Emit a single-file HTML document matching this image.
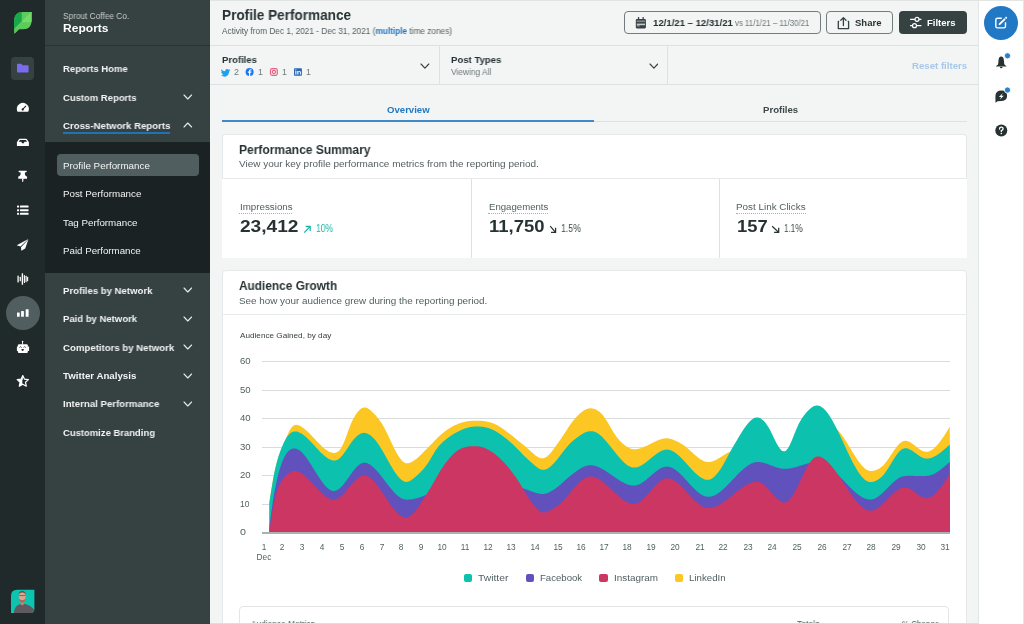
<!DOCTYPE html>
<html><head><meta charset="utf-8"><style>
html,body{margin:0;padding:0;width:1024px;height:624px;overflow:hidden;background:#f3f4f4}
body{position:relative;font-family:'Liberation Sans', sans-serif}
.t{position:absolute;white-space:nowrap;font-family:'Liberation Sans', sans-serif;will-change:transform;transform-origin:0 0}
.r{position:absolute;display:block}
</style></head><body>
<div class="r" style="left:0px;top:0px;width:45px;height:624px;background:#212a2b;"></div>
<div class="r" style="left:45px;top:0px;width:165px;height:624px;background:#364141;"></div>
<div class="r" style="left:45px;top:45px;width:165px;height:1px;background:#2a3434;"></div>
<div class="r" style="left:45px;top:142px;width:165px;height:131px;background:#1b2223;"></div>
<div class="r" style="left:210px;top:0px;width:768px;height:624px;background:#f3f4f4;"></div>
<div class="r" style="left:978px;top:0px;width:46px;height:624px;background:#ffffff;border-left:1px solid #e3e6e6;box-sizing:border-box;"></div>
<div class="r" style="left:1023px;top:0px;width:1px;height:624px;background:#e3e6e6;"></div>
<div class="r" style="left:210px;top:0px;width:814px;height:1px;background:#e3e5e5;"></div>
<div class="t" style="left:62.5px;top:11.72px;font-size:8.57px;line-height:8.57px;font-weight:400;color:#c8cccc;letter-spacing:0px;transform:scaleX(0.9677);">Sprout Coffee Co.</div>
<div class="t" style="left:62.5px;top:23.17px;font-size:11.57px;line-height:11.57px;font-weight:700;color:#ffffff;letter-spacing:0px;transform:scaleX(1.0425);">Reports</div>
<div class="t" style="left:62.5px;top:63.85px;font-size:9.71px;line-height:9.71px;font-weight:700;color:#f3f4f4;letter-spacing:0px;transform:scaleX(0.9749);">Reports Home</div>
<div class="t" style="left:62.5px;top:92.55px;font-size:9.71px;line-height:9.71px;font-weight:700;color:#f3f4f4;letter-spacing:0px;transform:scaleX(0.9759);">Custom Reports</div>
<svg class="r" style="left:183.0px;top:94.0px" width="9.6" height="6"><path d="M1 1 L4.8 5 L8.6 1" fill="none" stroke="#e6e9e9" stroke-width="1.1" stroke-linecap="round" stroke-linejoin="round"/></svg>
<div class="t" style="left:62.5px;top:120.95px;font-size:9.71px;line-height:9.71px;font-weight:700;color:#f3f4f4;letter-spacing:0px;transform:scaleX(0.9917);">Cross-Network Reports</div>
<svg class="r" style="left:183.0px;top:122.3px" width="9.6" height="6"><path d="M1 5 L4.8 1 L8.6 5" fill="none" stroke="#e6e9e9" stroke-width="1.1" stroke-linecap="round" stroke-linejoin="round"/></svg>
<div class="r" style="left:62.5px;top:132.3px;width:107px;height:2px;background:#2171b5;"></div>
<div class="r" style="left:57px;top:154px;width:142px;height:22px;background:#515e5f;border-radius:4px;"></div>
<div class="t" style="left:62.5px;top:160.65px;font-size:9.71px;line-height:9.71px;font-weight:400;color:#f3f4f4;letter-spacing:0px;transform:scaleX(1.0133);">Profile Performance</div>
<div class="t" style="left:62.5px;top:189.10px;font-size:9.71px;line-height:9.71px;font-weight:400;color:#f3f4f4;letter-spacing:0px;transform:scaleX(1.0092);">Post Performance</div>
<div class="t" style="left:62.5px;top:217.55px;font-size:9.71px;line-height:9.71px;font-weight:400;color:#f3f4f4;letter-spacing:0px;transform:scaleX(1.0080);">Tag Performance</div>
<div class="t" style="left:62.5px;top:246.00px;font-size:9.71px;line-height:9.71px;font-weight:400;color:#f3f4f4;letter-spacing:0px;transform:scaleX(1.0014);">Paid Performance</div>
<div class="t" style="left:62.5px;top:285.65px;font-size:9.71px;line-height:9.71px;font-weight:700;color:#f3f4f4;letter-spacing:0px;transform:scaleX(0.9865);">Profiles by Network</div>
<svg class="r" style="left:183.0px;top:287.4px" width="9.6" height="6"><path d="M1 1 L4.8 5 L8.6 1" fill="none" stroke="#e6e9e9" stroke-width="1.1" stroke-linecap="round" stroke-linejoin="round"/></svg>
<div class="t" style="left:62.5px;top:314.10px;font-size:9.71px;line-height:9.71px;font-weight:700;color:#f3f4f4;letter-spacing:0px;transform:scaleX(0.9810);">Paid by Network</div>
<svg class="r" style="left:183.0px;top:315.84999999999997px" width="9.6" height="6"><path d="M1 1 L4.8 5 L8.6 1" fill="none" stroke="#e6e9e9" stroke-width="1.1" stroke-linecap="round" stroke-linejoin="round"/></svg>
<div class="t" style="left:62.5px;top:342.55px;font-size:9.71px;line-height:9.71px;font-weight:700;color:#f3f4f4;letter-spacing:0px;transform:scaleX(0.9923);">Competitors by Network</div>
<svg class="r" style="left:183.0px;top:344.29999999999995px" width="9.6" height="6"><path d="M1 1 L4.8 5 L8.6 1" fill="none" stroke="#e6e9e9" stroke-width="1.1" stroke-linecap="round" stroke-linejoin="round"/></svg>
<div class="t" style="left:62.5px;top:371.00px;font-size:9.71px;line-height:9.71px;font-weight:700;color:#f3f4f4;letter-spacing:0px;transform:scaleX(0.9991);">Twitter Analysis</div>
<svg class="r" style="left:183.0px;top:372.75px" width="9.6" height="6"><path d="M1 1 L4.8 5 L8.6 1" fill="none" stroke="#e6e9e9" stroke-width="1.1" stroke-linecap="round" stroke-linejoin="round"/></svg>
<div class="t" style="left:62.5px;top:399.45px;font-size:9.71px;line-height:9.71px;font-weight:700;color:#f3f4f4;letter-spacing:0px;transform:scaleX(0.9928);">Internal Performance</div>
<svg class="r" style="left:183.0px;top:401.2px" width="9.6" height="6"><path d="M1 1 L4.8 5 L8.6 1" fill="none" stroke="#e6e9e9" stroke-width="1.1" stroke-linecap="round" stroke-linejoin="round"/></svg>
<div class="t" style="left:62.5px;top:427.90px;font-size:9.71px;line-height:9.71px;font-weight:700;color:#f3f4f4;letter-spacing:0px;transform:scaleX(0.9748);">Customize Branding</div>
<div class="t" style="left:222.2px;top:9.15px;font-size:13.71px;line-height:13.71px;font-weight:700;color:#273333;letter-spacing:0px;transform:scaleX(0.9917);">Profile Performance</div>
<div class="t" style="left:222.2px;top:26.65px;font-size:8.29px;line-height:8.29px;font-weight:400;color:#515e5f;letter-spacing:0px;transform:scaleX(0.9978);">Activity from Dec 1, 2021 - Dec 31, 2021 (<b style="color:#2079c3">multiple</b> time zones)</div>
<div class="r" style="left:210px;top:45px;width:768px;height:1px;background:#dee1e1;"></div>
<div class="r" style="left:623.5px;top:11px;width:197px;height:23px;border:1px solid #727c7c;border-radius:4px;box-sizing:border-box"></div>
<div class="t" style="left:652.6px;top:17.85px;font-size:9.71px;line-height:9.71px;font-weight:700;color:#273333;letter-spacing:0px;transform:scaleX(0.9868);">12/1/21 – 12/31/21</div>
<div class="t" style="left:734.9px;top:19.15px;font-size:8.29px;line-height:8.29px;font-weight:400;color:#6e797a;letter-spacing:0px;transform:scaleX(0.9479);">vs 11/1/21 – 11/30/21</div>
<div class="r" style="left:826px;top:11px;width:66.8px;height:23px;border:1px solid #727c7c;border-radius:4px;box-sizing:border-box"></div>
<div class="t" style="left:855.0px;top:17.78px;font-size:9.43px;line-height:9.43px;font-weight:700;color:#273333;letter-spacing:0px;transform:scaleX(1.0107);">Share</div>
<div class="r" style="left:899px;top:11px;width:67.8px;height:23px;background:#364141;border-radius:4px"></div>
<div class="t" style="left:927.3px;top:17.78px;font-size:9.43px;line-height:9.43px;font-weight:700;color:#ffffff;letter-spacing:0px;transform:scaleX(1.0065);">Filters</div>
<div class="r" style="left:210px;top:84px;width:768px;height:1px;background:#dee1e1;"></div>
<div class="r" style="left:439px;top:45px;width:1px;height:40px;background:#dee1e1;"></div>
<div class="r" style="left:667px;top:45px;width:1px;height:40px;background:#dee1e1;"></div>
<div class="t" style="left:222.2px;top:55.45px;font-size:9.71px;line-height:9.71px;font-weight:700;color:#273333;letter-spacing:0px;transform:scaleX(0.9795);">Profiles</div>
<div class="t" style="left:451.2px;top:55.45px;font-size:9.71px;line-height:9.71px;font-weight:700;color:#273333;letter-spacing:0px;transform:scaleX(0.9848);">Post Types</div>
<div class="t" style="left:451.2px;top:67.75px;font-size:9.0px;line-height:9.0px;font-weight:400;color:#6e797a;letter-spacing:0px;transform:scaleX(0.9311);">Viewing All</div>
<svg class="r" style="left:420.20000000000005px;top:62.49999999999999px" width="9.8" height="6.2"><path d="M1 1 L4.9 5.2 L8.8 1" fill="none" stroke="#364141" stroke-width="1.15" stroke-linecap="round" stroke-linejoin="round"/></svg>
<svg class="r" style="left:648.7px;top:62.49999999999999px" width="9.8" height="6.2"><path d="M1 1 L4.9 5.2 L8.8 1" fill="none" stroke="#364141" stroke-width="1.15" stroke-linecap="round" stroke-linejoin="round"/></svg>
<div class="t" style="left:911.9px;top:60.78px;font-size:9.43px;line-height:9.43px;font-weight:700;color:#a6c8ea;letter-spacing:0px;transform:scaleX(1.0211);">Reset filters</div>
<div class="t" style="left:233.5px;top:67.64px;font-size:8.9px;line-height:8.9px;font-weight:400;color:#6e797a;letter-spacing:0px;">2</div>
<div class="t" style="left:257.6px;top:67.64px;font-size:8.9px;line-height:8.9px;font-weight:400;color:#6e797a;letter-spacing:0px;">1</div>
<div class="t" style="left:281.6px;top:67.64px;font-size:8.9px;line-height:8.9px;font-weight:400;color:#6e797a;letter-spacing:0px;">1</div>
<div class="t" style="left:305.9px;top:67.64px;font-size:8.9px;line-height:8.9px;font-weight:400;color:#6e797a;letter-spacing:0px;">1</div>
<div class="t" style="left:387.0px;top:105.18px;font-size:9.43px;line-height:9.43px;font-weight:700;color:#2079c3;letter-spacing:0px;transform:scaleX(1.0183);">Overview</div>
<div class="t" style="left:763.4px;top:105.18px;font-size:9.43px;line-height:9.43px;font-weight:700;color:#3d4848;letter-spacing:0px;transform:scaleX(1.0176);">Profiles</div>
<div class="r" style="left:222px;top:120.5px;width:745px;height:1px;background:#dee1e1;"></div>
<div class="r" style="left:222px;top:120px;width:372.3px;height:2px;background:#3f88cc;"></div>
<div class="r" style="left:222.4px;top:133.5px;width:744.3px;height:45px;background:#fff;border:1px solid #e6e9e9;border-bottom:0;border-radius:4px 4px 0 0;box-sizing:border-box"></div>
<div class="r" style="left:221.8px;top:178px;width:745px;height:80px;background:#ffffff;"></div>
<div class="t" style="left:239.2px;top:143.63px;font-size:12.43px;line-height:12.43px;font-weight:700;color:#273333;letter-spacing:0px;transform:scaleX(0.9671);">Performance Summary</div>
<div class="t" style="left:239.2px;top:159.35px;font-size:9.71px;line-height:9.71px;font-weight:400;color:#515e5f;letter-spacing:0px;transform:scaleX(1.0266);">View your key profile performance metrics from the reporting period.</div>
<div class="r" style="left:222.4px;top:178px;width:744.3px;height:1px;background:#e6e9e9;"></div>
<div class="r" style="left:470.5px;top:178.5px;width:1px;height:79.5px;background:#dee1e1;"></div>
<div class="r" style="left:719px;top:178.5px;width:1px;height:79.5px;background:#dee1e1;"></div>
<div class="t" style="left:239.9px;top:201.68px;font-size:9.43px;line-height:9.43px;font-weight:400;color:#515e5f;letter-spacing:0px;transform:scaleX(1.0372);">Impressions</div>
<div class="r" style="left:239.4px;top:213px;width:52.99999999999997px;height:0;border-top:1px dotted #a9b0b0"></div>
<div class="t" style="left:240.3px;top:218.72px;font-size:16.57px;line-height:16.57px;font-weight:700;color:#273333;letter-spacing:0px;transform:scaleX(1.1533);">23,412</div>
<svg class="r" style="left:303.1px;top:225.2px" width="9" height="9"><path d="M1.2 7.6 L7.199999999999989 1.4 M2.599999999999989 1.4 H7.199999999999989 V6.0" fill="none" stroke="#17b8a6" stroke-width="1.25"/></svg>
<div class="t" style="left:316.2px;top:224.40px;font-size:10.0px;line-height:10.0px;font-weight:400;color:#17b8a6;letter-spacing:0px;transform:scaleX(0.8542);">10%</div>
<div class="t" style="left:488.5px;top:201.68px;font-size:9.43px;line-height:9.43px;font-weight:400;color:#515e5f;letter-spacing:0px;transform:scaleX(1.0209);">Engagements</div>
<div class="r" style="left:488.0px;top:213px;width:59.700000000000045px;height:0;border-top:1px dotted #a9b0b0"></div>
<div class="t" style="left:488.9px;top:218.72px;font-size:16.57px;line-height:16.57px;font-weight:700;color:#273333;letter-spacing:0px;transform:scaleX(1.1155);">11,750</div>
<svg class="r" style="left:548.8px;top:225.2px" width="9" height="9"><path d="M1.2 1.2 L6.600000000000023 7.4 M2.000000000000023 7.4 H6.600000000000023 V2.8000000000000007" fill="none" stroke="#273333" stroke-width="1.25"/></svg>
<div class="t" style="left:561.4px;top:224.40px;font-size:10.0px;line-height:10.0px;font-weight:400;color:#3d4848;letter-spacing:0px;transform:scaleX(0.8734);">1.5%</div>
<div class="t" style="left:736.4px;top:201.68px;font-size:9.43px;line-height:9.43px;font-weight:400;color:#515e5f;letter-spacing:0px;transform:scaleX(1.0465);">Post Link Clicks</div>
<div class="r" style="left:735.9px;top:213px;width:69.89999999999998px;height:0;border-top:1px dotted #a9b0b0"></div>
<div class="t" style="left:736.8px;top:218.72px;font-size:16.57px;line-height:16.57px;font-weight:700;color:#273333;letter-spacing:0px;transform:scaleX(1.1102);">157</div>
<svg class="r" style="left:770.9px;top:225.2px" width="9" height="9"><path d="M1.2 1.2 L7.699999999999932 7.4 M3.099999999999932 7.4 H7.699999999999932 V2.8000000000000007" fill="none" stroke="#273333" stroke-width="1.25"/></svg>
<div class="t" style="left:784.2px;top:224.40px;font-size:10.0px;line-height:10.0px;font-weight:400;color:#3d4848;letter-spacing:0px;transform:scaleX(0.8055);">1.1%</div>
<div class="r" style="left:222.4px;top:270px;width:744.3px;height:400px;background:#fff;border:1px solid #e6e9e9;border-radius:4px;box-sizing:border-box"></div>
<div class="t" style="left:239.3px;top:280.35px;font-size:12.29px;line-height:12.29px;font-weight:700;color:#273333;letter-spacing:0px;transform:scaleX(0.9652);">Audience Growth</div>
<div class="t" style="left:239.3px;top:296.02px;font-size:9.86px;line-height:9.86px;font-weight:400;color:#515e5f;letter-spacing:0px;transform:scaleX(1.0016);">See how your audience grew during the reporting period.</div>
<div class="r" style="left:222.4px;top:314px;width:744.3px;height:1px;background:#e8ebeb;"></div>
<div class="t" style="left:240.0px;top:332.00px;font-size:8.0px;line-height:8.0px;font-weight:400;color:#364141;letter-spacing:0px;transform:scaleX(1.0209);">Audience Gained, by day</div>
<div class="r" style="left:261.7px;top:361.0px;width:688.3px;height:1px;background:#d9dcdc;"></div>
<div class="t" style="left:239.8px;top:357.33px;font-size:8.43px;line-height:8.43px;font-weight:400;color:#515e5f;letter-spacing:0px;transform:scaleX(1.1383);">60</div>
<div class="r" style="left:261.7px;top:389.5px;width:688.3px;height:1px;background:#d9dcdc;"></div>
<div class="t" style="left:239.8px;top:385.83px;font-size:8.43px;line-height:8.43px;font-weight:400;color:#515e5f;letter-spacing:0px;transform:scaleX(1.1383);">50</div>
<div class="r" style="left:261.7px;top:418.0px;width:688.3px;height:1px;background:#d9dcdc;"></div>
<div class="t" style="left:239.8px;top:414.33px;font-size:8.43px;line-height:8.43px;font-weight:400;color:#515e5f;letter-spacing:0px;transform:scaleX(1.1383);">40</div>
<div class="r" style="left:261.7px;top:446.5px;width:688.3px;height:1px;background:#d9dcdc;"></div>
<div class="t" style="left:239.8px;top:442.83px;font-size:8.43px;line-height:8.43px;font-weight:400;color:#515e5f;letter-spacing:0px;transform:scaleX(1.1383);">30</div>
<div class="r" style="left:261.7px;top:475.0px;width:688.3px;height:1px;background:#d9dcdc;"></div>
<div class="t" style="left:239.8px;top:471.33px;font-size:8.43px;line-height:8.43px;font-weight:400;color:#515e5f;letter-spacing:0px;transform:scaleX(1.1383);">20</div>
<div class="r" style="left:261.7px;top:503.5px;width:688.3px;height:1px;background:#d9dcdc;"></div>
<div class="t" style="left:239.8px;top:499.83px;font-size:8.43px;line-height:8.43px;font-weight:400;color:#515e5f;letter-spacing:0px;transform:scaleX(0.9790);">10</div>
<div class="t" style="left:239.8px;top:528.33px;font-size:8.43px;line-height:8.43px;font-weight:400;color:#515e5f;letter-spacing:0px;transform:scaleX(1.2691);">0</div>
<svg class="r" style="left:0;top:0" width="1024" height="624" viewBox="0 0 1024 624"><path d="M269.30,532.5 L269.30,502.90 269.8,499.62 270.3,496.37 270.8,493.15 271.3,489.99 271.8,486.90 272.3,483.90 272.8,481.01 273.3,478.23 273.8,475.57 274.3,473.05 274.8,470.66 275.3,468.40 275.8,466.28 276.3,464.29 276.8,462.41 277.3,460.66 277.8,459.01 278.3,457.45 278.8,455.98 279.3,454.58 279.8,453.24 280.3,451.95 280.8,450.70 281.3,449.47 281.8,448.27 282.3,447.08 282.8,445.90 283.3,444.71 283.8,443.53 284.3,442.34 284.8,441.16 285.3,439.97 285.8,438.79 286.3,437.61 286.8,436.45 287.3,435.32 287.8,434.21 288.3,433.13 288.8,432.10 289.3,431.12 289.8,430.20 290.3,429.34 290.8,428.54 291.3,427.83 291.8,427.19 292.3,426.63 292.8,426.15 293.3,425.75 293.8,425.43 294.3,425.18 294.8,425.00 295.3,424.89 295.8,424.84 296.3,424.83 296.8,424.88 297.3,424.96 297.8,425.08 298.3,425.23 298.8,425.41 299.3,425.62 299.8,425.85 300.3,426.10 300.8,426.37 301.3,426.66 301.8,426.97 302.3,427.29 302.8,427.63 303.3,427.99 303.8,428.37 304.3,428.75 304.8,429.16 305.3,429.57 305.8,430.00 306.3,430.44 306.8,430.89 307.3,431.35 307.8,431.82 308.3,432.30 308.8,432.79 309.3,433.29 309.8,433.79 310.3,434.30 310.8,434.82 311.3,435.34 311.8,435.87 312.3,436.40 312.8,436.93 313.3,437.46 313.8,438.00 314.3,438.54 314.8,439.07 315.3,439.61 315.8,440.14 316.3,440.68 316.8,441.21 317.3,441.74 317.8,442.26 318.3,442.78 318.8,443.30 319.3,443.81 319.8,444.31 320.3,444.80 320.8,445.29 321.3,445.77 321.8,446.24 322.3,446.70 322.8,447.15 323.3,447.59 323.8,448.01 324.3,448.42 324.8,448.82 325.3,449.21 325.8,449.58 326.3,449.94 326.8,450.27 327.3,450.60 327.8,450.90 328.3,451.19 328.8,451.46 329.3,451.70 329.8,451.93 330.3,452.14 330.8,452.32 331.3,452.49 331.8,452.62 332.3,452.73 332.8,452.82 333.3,452.88 333.8,452.90 334.3,452.90 334.8,452.85 335.3,452.78 335.8,452.66 336.3,452.50 336.8,452.29 337.3,452.03 337.8,451.72 338.3,451.35 338.8,450.91 339.3,450.41 339.8,449.84 340.3,449.20 340.8,448.48 341.3,447.69 341.8,446.82 342.3,445.87 342.8,444.85 343.3,443.76 343.8,442.62 344.3,441.41 344.8,440.15 345.3,438.85 345.8,437.52 346.3,436.17 346.8,434.79 347.3,433.41 347.8,432.03 348.3,430.66 348.8,429.31 349.3,427.98 349.8,426.68 350.3,425.43 350.8,424.21 351.3,423.04 351.8,421.91 352.3,420.84 352.8,419.81 353.3,418.83 353.8,417.90 354.3,417.01 354.8,416.16 355.3,415.35 355.8,414.57 356.3,413.83 356.8,413.12 357.3,412.45 357.8,411.82 358.3,411.21 358.8,410.65 359.3,410.13 359.8,409.65 360.3,409.21 360.8,408.81 361.3,408.47 361.8,408.17 362.3,407.92 362.8,407.72 363.3,407.58 363.8,407.48 364.3,407.43 364.8,407.43 365.3,407.48 365.8,407.57 366.3,407.70 366.8,407.88 367.3,408.09 367.8,408.34 368.3,408.63 368.8,408.95 369.3,409.30 369.8,409.67 370.3,410.07 370.8,410.50 371.3,410.94 371.8,411.41 372.3,411.89 372.8,412.39 373.3,412.90 373.8,413.42 374.3,413.96 374.8,414.50 375.3,415.05 375.8,415.61 376.3,416.18 376.8,416.76 377.3,417.35 377.8,417.95 378.3,418.57 378.8,419.21 379.3,419.86 379.8,420.54 380.3,421.24 380.8,421.97 381.3,422.72 381.8,423.50 382.3,424.32 382.8,425.15 383.3,426.02 383.8,426.91 384.3,427.83 384.8,428.77 385.3,429.73 385.8,430.71 386.3,431.71 386.8,432.73 387.3,433.75 387.8,434.79 388.3,435.84 388.8,436.90 389.3,437.96 389.8,439.03 390.3,440.09 390.8,441.16 391.3,442.23 391.8,443.29 392.3,444.34 392.8,445.38 393.3,446.42 393.8,447.44 394.3,448.45 394.8,449.44 395.3,450.41 395.8,451.37 396.3,452.30 396.8,453.20 397.3,454.08 397.8,454.93 398.3,455.75 398.8,456.54 399.3,457.29 399.8,458.01 400.3,458.68 400.8,459.32 401.3,459.92 401.8,460.47 402.3,460.97 402.8,461.43 403.3,461.84 403.8,462.20 404.3,462.51 404.8,462.77 405.3,462.97 405.8,463.13 406.3,463.24 406.8,463.30 407.3,463.31 407.8,463.28 408.3,463.22 408.8,463.11 409.3,462.97 409.8,462.80 410.3,462.60 410.8,462.38 411.3,462.14 411.8,461.88 412.3,461.60 412.8,461.30 413.3,460.99 413.8,460.67 414.3,460.34 414.8,459.99 415.3,459.63 415.8,459.26 416.3,458.88 416.8,458.48 417.3,458.07 417.8,457.65 418.3,457.21 418.8,456.77 419.3,456.31 419.8,455.84 420.3,455.36 420.8,454.88 421.3,454.39 421.8,453.89 422.3,453.38 422.8,452.87 423.3,452.36 423.8,451.84 424.3,451.32 424.8,450.81 425.3,450.29 425.8,449.77 426.3,449.26 426.8,448.75 427.3,448.24 427.8,447.73 428.3,447.22 428.8,446.71 429.3,446.20 429.8,445.70 430.3,445.19 430.8,444.68 431.3,444.17 431.8,443.66 432.3,443.15 432.8,442.64 433.3,442.13 433.8,441.62 434.3,441.10 434.8,440.59 435.3,440.08 435.8,439.57 436.3,439.07 436.8,438.56 437.3,438.07 437.8,437.57 438.3,437.08 438.8,436.60 439.3,436.13 439.8,435.66 440.3,435.20 440.8,434.75 441.3,434.31 441.8,433.88 442.3,433.45 442.8,433.04 443.3,432.63 443.8,432.24 444.3,431.85 444.8,431.47 445.3,431.10 445.8,430.73 446.3,430.37 446.8,430.02 447.3,429.68 447.8,429.35 448.3,429.02 448.8,428.70 449.3,428.38 449.8,428.07 450.3,427.77 450.8,427.47 451.3,427.18 451.8,426.90 452.3,426.62 452.8,426.35 453.3,426.09 453.8,425.83 454.3,425.58 454.8,425.34 455.3,425.10 455.8,424.86 456.3,424.64 456.8,424.42 457.3,424.21 457.8,424.00 458.3,423.80 458.8,423.61 459.3,423.42 459.8,423.24 460.3,423.07 460.8,422.90 461.3,422.74 461.8,422.59 462.3,422.44 462.8,422.30 463.3,422.17 463.8,422.04 464.3,421.92 464.8,421.81 465.3,421.70 465.8,421.60 466.3,421.50 466.8,421.41 467.3,421.33 467.8,421.25 468.3,421.17 468.8,421.10 469.3,421.04 469.8,420.98 470.3,420.93 470.8,420.88 471.3,420.84 471.8,420.80 472.3,420.76 472.8,420.74 473.3,420.71 473.8,420.69 474.3,420.67 474.8,420.66 475.3,420.65 475.8,420.64 476.3,420.64 476.8,420.65 477.3,420.65 477.8,420.66 478.3,420.67 478.8,420.69 479.3,420.71 479.8,420.74 480.3,420.77 480.8,420.80 481.3,420.84 481.8,420.88 482.3,420.92 482.8,420.97 483.3,421.03 483.8,421.09 484.3,421.16 484.8,421.23 485.3,421.31 485.8,421.39 486.3,421.48 486.8,421.57 487.3,421.68 487.8,421.78 488.3,421.90 488.8,422.02 489.3,422.15 489.8,422.28 490.3,422.42 490.8,422.57 491.3,422.73 491.8,422.90 492.3,423.07 492.8,423.25 493.3,423.44 493.8,423.64 494.3,423.85 494.8,424.06 495.3,424.29 495.8,424.52 496.3,424.77 496.8,425.02 497.3,425.28 497.8,425.56 498.3,425.84 498.8,426.13 499.3,426.43 499.8,426.74 500.3,427.06 500.8,427.38 501.3,427.71 501.8,428.05 502.3,428.40 502.8,428.75 503.3,429.11 503.8,429.47 504.3,429.83 504.8,430.20 505.3,430.57 505.8,430.94 506.3,431.32 506.8,431.69 507.3,432.07 507.8,432.45 508.3,432.83 508.8,433.21 509.3,433.59 509.8,433.97 510.3,434.36 510.8,434.75 511.3,435.13 511.8,435.52 512.3,435.92 512.8,436.31 513.3,436.71 513.8,437.11 514.3,437.52 514.8,437.92 515.3,438.33 515.8,438.73 516.3,439.14 516.8,439.55 517.3,439.96 517.8,440.38 518.3,440.79 518.8,441.20 519.3,441.61 519.8,442.02 520.3,442.43 520.8,442.84 521.3,443.25 521.8,443.65 522.3,444.06 522.8,444.46 523.3,444.87 523.8,445.27 524.3,445.68 524.8,446.08 525.3,446.49 525.8,446.90 526.3,447.32 526.8,447.74 527.3,448.16 527.8,448.59 528.3,449.03 528.8,449.47 529.3,449.92 529.8,450.38 530.3,450.83 530.8,451.29 531.3,451.75 531.8,452.21 532.3,452.66 532.8,453.11 533.3,453.56 533.8,454.00 534.3,454.42 534.8,454.84 535.3,455.24 535.8,455.63 536.3,455.99 536.8,456.34 537.3,456.67 537.8,456.98 538.3,457.26 538.8,457.51 539.3,457.74 539.8,457.93 540.3,458.09 540.8,458.22 541.3,458.31 541.8,458.36 542.3,458.37 542.8,458.34 543.3,458.28 543.8,458.17 544.3,458.01 544.8,457.82 545.3,457.58 545.8,457.31 546.3,456.99 546.8,456.64 547.3,456.25 547.8,455.83 548.3,455.37 548.8,454.88 549.3,454.37 549.8,453.82 550.3,453.26 550.8,452.67 551.3,452.06 551.8,451.43 552.3,450.79 552.8,450.13 553.3,449.46 553.8,448.78 554.3,448.09 554.8,447.40 555.3,446.70 555.8,446.00 556.3,445.29 556.8,444.59 557.3,443.89 557.8,443.18 558.3,442.48 558.8,441.78 559.3,441.08 559.8,440.38 560.3,439.67 560.8,438.96 561.3,438.25 561.8,437.53 562.3,436.80 562.8,436.06 563.3,435.31 563.8,434.56 564.3,433.79 564.8,433.03 565.3,432.25 565.8,431.47 566.3,430.69 566.8,429.91 567.3,429.13 567.8,428.35 568.3,427.58 568.8,426.81 569.3,426.06 569.8,425.31 570.3,424.58 570.8,423.86 571.3,423.15 571.8,422.46 572.3,421.79 572.8,421.13 573.3,420.50 573.8,419.88 574.3,419.27 574.8,418.69 575.3,418.12 575.8,417.56 576.3,417.02 576.8,416.50 577.3,415.98 577.8,415.48 578.3,414.99 578.8,414.51 579.3,414.04 579.8,413.59 580.3,413.15 580.8,412.73 581.3,412.32 581.8,411.92 582.3,411.54 582.8,411.18 583.3,410.84 583.8,410.51 584.3,410.21 584.8,409.92 585.3,409.66 585.8,409.41 586.3,409.20 586.8,409.00 587.3,408.83 587.8,408.68 588.3,408.55 588.8,408.46 589.3,408.38 589.8,408.33 590.3,408.31 590.8,408.31 591.3,408.33 591.8,408.38 592.3,408.45 592.8,408.54 593.3,408.65 593.8,408.79 594.3,408.95 594.8,409.12 595.3,409.32 595.8,409.54 596.3,409.78 596.8,410.05 597.3,410.33 597.8,410.64 598.3,410.96 598.8,411.32 599.3,411.70 599.8,412.11 600.3,412.55 600.8,413.01 601.3,413.51 601.8,414.04 602.3,414.60 602.8,415.20 603.3,415.82 603.8,416.48 604.3,417.16 604.8,417.88 605.3,418.62 605.8,419.38 606.3,420.16 606.8,420.96 607.3,421.78 607.8,422.61 608.3,423.45 608.8,424.30 609.3,425.16 609.8,426.03 610.3,426.89 610.8,427.75 611.3,428.61 611.8,429.46 612.3,430.31 612.8,431.14 613.3,431.96 613.8,432.77 614.3,433.55 614.8,434.32 615.3,435.07 615.8,435.79 616.3,436.49 616.8,437.16 617.3,437.81 617.8,438.44 618.3,439.04 618.8,439.62 619.3,440.17 619.8,440.71 620.3,441.23 620.8,441.73 621.3,442.22 621.8,442.69 622.3,443.15 622.8,443.60 623.3,444.04 623.8,444.46 624.3,444.86 624.8,445.26 625.3,445.64 625.8,446.00 626.3,446.35 626.8,446.68 627.3,447.00 627.8,447.29 628.3,447.57 628.8,447.83 629.3,448.07 629.8,448.29 630.3,448.48 630.8,448.66 631.3,448.81 631.8,448.94 632.3,449.04 632.8,449.13 633.3,449.19 633.8,449.24 634.3,449.26 634.8,449.26 635.3,449.25 635.8,449.21 636.3,449.16 636.8,449.10 637.3,449.02 637.8,448.93 638.3,448.83 638.8,448.71 639.3,448.58 639.8,448.44 640.3,448.29 640.8,448.13 641.3,447.97 641.8,447.79 642.3,447.60 642.8,447.41 643.3,447.21 643.8,447.00 644.3,446.79 644.8,446.57 645.3,446.34 645.8,446.11 646.3,445.88 646.8,445.64 647.3,445.40 647.8,445.16 648.3,444.91 648.8,444.66 649.3,444.41 649.8,444.15 650.3,443.90 650.8,443.65 651.3,443.40 651.8,443.14 652.3,442.89 652.8,442.64 653.3,442.40 653.8,442.15 654.3,441.91 654.8,441.67 655.3,441.44 655.8,441.21 656.3,440.99 656.8,440.77 657.3,440.56 657.8,440.35 658.3,440.15 658.8,439.96 659.3,439.77 659.8,439.60 660.3,439.43 660.8,439.28 661.3,439.13 661.8,438.99 662.3,438.87 662.8,438.75 663.3,438.65 663.8,438.56 664.3,438.48 664.8,438.42 665.3,438.37 665.8,438.34 666.3,438.32 666.8,438.32 667.3,438.33 667.8,438.36 668.3,438.41 668.8,438.48 669.3,438.56 669.8,438.66 670.3,438.78 670.8,438.91 671.3,439.05 671.8,439.21 672.3,439.39 672.8,439.57 673.3,439.77 673.8,439.97 674.3,440.18 674.8,440.40 675.3,440.63 675.8,440.86 676.3,441.10 676.8,441.34 677.3,441.59 677.8,441.84 678.3,442.09 678.8,442.35 679.3,442.61 679.8,442.88 680.3,443.15 680.8,443.44 681.3,443.73 681.8,444.03 682.3,444.35 682.8,444.67 683.3,445.01 683.8,445.36 684.3,445.72 684.8,446.09 685.3,446.47 685.8,446.87 686.3,447.27 686.8,447.68 687.3,448.10 687.8,448.53 688.3,448.96 688.8,449.40 689.3,449.85 689.8,450.30 690.3,450.75 690.8,451.21 691.3,451.66 691.8,452.12 692.3,452.58 692.8,453.03 693.3,453.49 693.8,453.94 694.3,454.38 694.8,454.83 695.3,455.26 695.8,455.69 696.3,456.12 696.8,456.53 697.3,456.94 697.8,457.34 698.3,457.73 698.8,458.10 699.3,458.47 699.8,458.82 700.3,459.15 700.8,459.48 701.3,459.78 701.8,460.07 702.3,460.34 702.8,460.60 703.3,460.83 703.8,461.05 704.3,461.24 704.8,461.42 705.3,461.57 705.8,461.70 706.3,461.81 706.8,461.89 707.3,461.96 707.8,461.99 708.3,462.01 708.8,462.00 709.3,461.97 709.8,461.92 710.3,461.85 710.8,461.76 711.3,461.65 711.8,461.52 712.3,461.37 712.8,461.21 713.3,461.03 713.8,460.83 714.3,460.62 714.8,460.40 715.3,460.16 715.8,459.92 716.3,459.66 716.8,459.39 717.3,459.12 717.8,458.83 718.3,458.54 718.8,458.24 719.3,457.94 719.8,457.64 720.3,457.33 720.8,457.01 721.3,456.70 721.8,456.38 722.3,456.07 722.8,455.75 723.3,455.44 723.8,455.13 724.3,454.82 724.8,454.51 725.3,454.22 725.8,453.92 726.3,453.64 726.8,453.36 727.3,453.09 727.8,452.83 728.3,452.58 728.8,452.34 729.3,452.11 729.8,451.89 730.3,451.69 730.8,451.49 731.3,451.30 731.8,451.12 732.3,450.96 732.8,450.80 733.3,450.64 733.8,450.50 734.3,450.36 734.8,450.23 735.3,450.11 735.8,449.99 736.3,449.87 736.8,449.77 737.3,449.66 737.8,449.56 738.3,449.46 738.8,449.37 739.3,449.28 739.8,449.20 740.3,449.11 740.8,449.04 741.3,448.96 741.8,448.89 742.3,448.83 742.8,448.76 743.3,448.70 743.8,448.65 744.3,448.59 744.8,448.54 745.3,448.49 745.8,448.45 746.3,448.41 746.8,448.37 747.3,448.33 747.8,448.29 748.3,448.26 748.8,448.23 749.3,448.21 749.8,448.18 750.3,448.16 750.8,448.14 751.3,448.12 751.8,448.10 752.3,448.08 752.8,448.07 753.3,448.06 753.8,448.05 754.3,448.04 754.8,448.04 755.3,448.04 755.8,448.04 756.3,448.05 756.8,448.06 757.3,448.07 757.8,448.10 758.3,448.12 758.8,448.16 759.3,448.21 759.8,448.26 760.3,448.32 760.8,448.40 761.3,448.48 761.8,448.57 762.3,448.67 762.8,448.78 763.3,448.90 763.8,449.03 764.3,449.16 764.8,449.30 765.3,449.45 765.8,449.60 766.3,449.76 766.8,449.93 767.3,450.10 767.8,450.27 768.3,450.45 768.8,450.63 769.3,450.81 769.8,451.00 770.3,451.18 770.8,451.37 771.3,451.56 771.8,451.74 772.3,451.93 772.8,452.11 773.3,452.30 773.8,452.48 774.3,452.66 774.8,452.83 775.3,453.00 775.8,453.17 776.3,453.33 776.8,453.49 777.3,453.64 777.8,453.78 778.3,453.92 778.8,454.05 779.3,454.17 779.8,454.28 780.3,454.38 780.8,454.47 781.3,454.55 781.8,454.61 782.3,454.66 782.8,454.69 783.3,454.70 783.8,454.68 784.3,454.64 784.8,454.57 785.3,454.46 785.8,454.32 786.3,454.14 786.8,453.92 787.3,453.66 787.8,453.36 788.3,453.01 788.8,452.62 789.3,452.19 789.8,451.72 790.3,451.21 790.8,450.66 791.3,450.07 791.8,449.45 792.3,448.80 792.8,448.11 793.3,447.39 793.8,446.64 794.3,445.87 794.8,445.08 795.3,444.26 795.8,443.42 796.3,442.56 796.8,441.68 797.3,440.79 797.8,439.89 798.3,438.97 798.8,438.05 799.3,437.11 799.8,436.17 800.3,435.23 800.8,434.28 801.3,433.34 801.8,432.39 802.3,431.45 802.8,430.51 803.3,429.58 803.8,428.66 804.3,427.75 804.8,426.85 805.3,425.96 805.8,425.10 806.3,424.24 806.8,423.41 807.3,422.60 807.8,421.82 808.3,421.05 808.8,420.32 809.3,419.61 809.8,418.94 810.3,418.30 810.8,417.69 811.3,417.11 811.8,416.58 812.3,416.09 812.8,415.63 813.3,415.22 813.8,414.85 814.3,414.53 814.8,414.25 815.3,414.02 815.8,413.83 816.3,413.69 816.8,413.59 817.3,413.53 817.8,413.52 818.3,413.54 818.8,413.61 819.3,413.71 819.8,413.84 820.3,414.01 820.8,414.21 821.3,414.44 821.8,414.69 822.3,414.97 822.8,415.28 823.3,415.60 823.8,415.95 824.3,416.32 824.8,416.71 825.3,417.12 825.8,417.55 826.3,417.99 826.8,418.44 827.3,418.91 827.8,419.39 828.3,419.88 828.8,420.38 829.3,420.89 829.8,421.41 830.3,421.94 830.8,422.46 831.3,423.00 831.8,423.53 832.3,424.07 832.8,424.61 833.3,425.15 833.8,425.69 834.3,426.23 834.8,426.77 835.3,427.31 835.8,427.85 836.3,428.39 836.8,428.93 837.3,429.49 837.8,430.05 838.3,430.62 838.8,431.20 839.3,431.79 839.8,432.40 840.3,433.02 840.8,433.67 841.3,434.32 841.8,435.00 842.3,435.69 842.8,436.40 843.3,437.12 843.8,437.86 844.3,438.61 844.8,439.38 845.3,440.15 845.8,440.94 846.3,441.74 846.8,442.54 847.3,443.36 847.8,444.18 848.3,445.00 848.8,445.83 849.3,446.66 849.8,447.50 850.3,448.34 850.8,449.17 851.3,450.01 851.8,450.85 852.3,451.68 852.8,452.50 853.3,453.33 853.8,454.14 854.3,454.95 854.8,455.75 855.3,456.55 855.8,457.33 856.3,458.10 856.8,458.86 857.3,459.60 857.8,460.33 858.3,461.05 858.8,461.74 859.3,462.42 859.8,463.09 860.3,463.73 860.8,464.35 861.3,464.95 861.8,465.52 862.3,466.07 862.8,466.60 863.3,467.10 863.8,467.58 864.3,468.02 864.8,468.44 865.3,468.82 865.8,469.18 866.3,469.50 866.8,469.80 867.3,470.05 867.8,470.28 868.3,470.47 868.8,470.63 869.3,470.76 869.8,470.85 870.3,470.92 870.8,470.96 871.3,470.97 871.8,470.95 872.3,470.91 872.8,470.85 873.3,470.76 873.8,470.66 874.3,470.54 874.8,470.40 875.3,470.24 875.8,470.07 876.3,469.89 876.8,469.69 877.3,469.47 877.8,469.24 878.3,468.99 878.8,468.72 879.3,468.44 879.8,468.13 880.3,467.80 880.8,467.44 881.3,467.06 881.8,466.65 882.3,466.21 882.8,465.75 883.3,465.25 883.8,464.73 884.3,464.18 884.8,463.60 885.3,463.00 885.8,462.37 886.3,461.72 886.8,461.06 887.3,460.37 887.8,459.67 888.3,458.96 888.8,458.23 889.3,457.49 889.8,456.75 890.3,456.00 890.8,455.25 891.3,454.49 891.8,453.74 892.3,452.99 892.8,452.24 893.3,451.50 893.8,450.77 894.3,450.05 894.8,449.34 895.3,448.64 895.8,447.97 896.3,447.31 896.8,446.67 897.3,446.06 897.8,445.47 898.3,444.91 898.8,444.37 899.3,443.87 899.8,443.40 900.3,442.97 900.8,442.57 901.3,442.21 901.8,441.89 902.3,441.61 902.8,441.37 903.3,441.17 903.8,441.02 904.3,440.91 904.8,440.84 905.3,440.81 905.8,440.82 906.3,440.87 906.8,440.95 907.3,441.07 907.8,441.22 908.3,441.40 908.8,441.60 909.3,441.84 909.8,442.09 910.3,442.37 910.8,442.67 911.3,442.98 911.8,443.32 912.3,443.66 912.8,444.02 913.3,444.39 913.8,444.77 914.3,445.15 914.8,445.54 915.3,445.93 915.8,446.33 916.3,446.72 916.8,447.12 917.3,447.50 917.8,447.89 918.3,448.26 918.8,448.63 919.3,448.98 919.8,449.32 920.3,449.65 920.8,449.95 921.3,450.24 921.8,450.52 922.3,450.76 922.8,450.99 923.3,451.19 923.8,451.36 924.3,451.51 924.8,451.62 925.3,451.71 925.8,451.76 926.3,451.79 926.8,451.78 927.3,451.74 927.8,451.67 928.3,451.57 928.8,451.43 929.3,451.27 929.8,451.07 930.3,450.85 930.8,450.59 931.3,450.31 931.8,450.00 932.3,449.66 932.8,449.30 933.3,448.91 933.8,448.50 934.3,448.06 934.8,447.60 935.3,447.12 935.8,446.62 936.3,446.10 936.8,445.55 937.3,444.99 937.8,444.40 938.3,443.80 938.8,443.19 939.3,442.55 939.8,441.90 940.3,441.24 940.8,440.56 941.3,439.86 941.8,439.16 942.3,438.44 942.8,437.71 943.3,436.97 943.8,436.22 944.3,435.46 944.8,434.70 945.3,433.92 945.8,433.14 946.3,432.35 946.8,431.56 947.3,430.76 947.8,429.96 948.3,429.15 948.8,428.35 949.3,427.54 949.8,426.73 L950.00,532.5 Z" fill="#fdc723"/><path d="M269.30,532.5 L269.30,502.90 269.8,499.62 270.3,496.36 270.8,493.14 271.3,489.98 271.8,486.89 272.3,483.89 272.8,480.99 273.3,478.21 273.8,475.54 274.3,473.01 274.8,470.60 275.3,468.32 275.8,466.17 276.3,464.13 276.8,462.21 277.3,460.39 277.8,458.66 278.3,457.02 278.8,455.45 279.3,453.96 279.8,452.52 280.3,451.14 280.8,449.80 281.3,448.52 281.8,447.27 282.3,446.07 282.8,444.91 283.3,443.80 283.8,442.73 284.3,441.70 284.8,440.73 285.3,439.80 285.8,438.92 286.3,438.09 286.8,437.31 287.3,436.58 287.8,435.90 288.3,435.27 288.8,434.70 289.3,434.17 289.8,433.69 290.3,433.26 290.8,432.88 291.3,432.54 291.8,432.26 292.3,432.01 292.8,431.81 293.3,431.66 293.8,431.54 294.3,431.47 294.8,431.43 295.3,431.42 295.8,431.45 296.3,431.51 296.8,431.60 297.3,431.71 297.8,431.85 298.3,432.02 298.8,432.21 299.3,432.42 299.8,432.66 300.3,432.91 300.8,433.18 301.3,433.48 301.8,433.79 302.3,434.12 302.8,434.46 303.3,434.82 303.8,435.20 304.3,435.59 304.8,436.00 305.3,436.42 305.8,436.85 306.3,437.30 306.8,437.75 307.3,438.22 307.8,438.70 308.3,439.18 308.8,439.68 309.3,440.18 309.8,440.69 310.3,441.21 310.8,441.73 311.3,442.26 311.8,442.79 312.3,443.33 312.8,443.87 313.3,444.42 313.8,444.96 314.3,445.51 314.8,446.05 315.3,446.60 315.8,447.15 316.3,447.69 316.8,448.24 317.3,448.78 317.8,449.31 318.3,449.85 318.8,450.37 319.3,450.89 319.8,451.41 320.3,451.92 320.8,452.42 321.3,452.92 321.8,453.40 322.3,453.87 322.8,454.34 323.3,454.79 323.8,455.24 324.3,455.67 324.8,456.08 325.3,456.49 325.8,456.88 326.3,457.25 326.8,457.61 327.3,457.95 327.8,458.28 328.3,458.58 328.8,458.87 329.3,459.14 329.8,459.39 330.3,459.62 330.8,459.83 331.3,460.01 331.8,460.17 332.3,460.31 332.8,460.41 333.3,460.49 333.8,460.54 334.3,460.55 334.8,460.53 335.3,460.47 335.8,460.37 336.3,460.23 336.8,460.05 337.3,459.82 337.8,459.56 338.3,459.25 338.8,458.90 339.3,458.51 339.8,458.08 340.3,457.61 340.8,457.11 341.3,456.58 341.8,456.01 342.3,455.42 342.8,454.80 343.3,454.15 343.8,453.49 344.3,452.80 344.8,452.10 345.3,451.38 345.8,450.66 346.3,449.92 346.8,449.17 347.3,448.42 347.8,447.67 348.3,446.91 348.8,446.16 349.3,445.42 349.8,444.68 350.3,443.95 350.8,443.23 351.3,442.52 351.8,441.83 352.3,441.16 352.8,440.51 353.3,439.88 353.8,439.28 354.3,438.70 354.8,438.15 355.3,437.63 355.8,437.13 356.3,436.66 356.8,436.22 357.3,435.81 357.8,435.42 358.3,435.06 358.8,434.72 359.3,434.41 359.8,434.12 360.3,433.86 360.8,433.62 361.3,433.41 361.8,433.23 362.3,433.09 362.8,432.98 363.3,432.91 363.8,432.87 364.3,432.87 364.8,432.91 365.3,432.99 365.8,433.10 366.3,433.25 366.8,433.43 367.3,433.63 367.8,433.86 368.3,434.12 368.8,434.40 369.3,434.69 369.8,435.01 370.3,435.36 370.8,435.72 371.3,436.10 371.8,436.51 372.3,436.94 372.8,437.40 373.3,437.88 373.8,438.39 374.3,438.93 374.8,439.49 375.3,440.08 375.8,440.70 376.3,441.33 376.8,441.99 377.3,442.68 377.8,443.38 378.3,444.11 378.8,444.85 379.3,445.61 379.8,446.39 380.3,447.19 380.8,448.00 381.3,448.82 381.8,449.65 382.3,450.50 382.8,451.36 383.3,452.22 383.8,453.09 384.3,453.97 384.8,454.86 385.3,455.75 385.8,456.64 386.3,457.53 386.8,458.43 387.3,459.32 387.8,460.22 388.3,461.11 388.8,462.00 389.3,462.88 389.8,463.76 390.3,464.63 390.8,465.49 391.3,466.34 391.8,467.18 392.3,468.01 392.8,468.83 393.3,469.63 393.8,470.42 394.3,471.19 394.8,471.95 395.3,472.69 395.8,473.40 396.3,474.10 396.8,474.78 397.3,475.43 397.8,476.06 398.3,476.66 398.8,477.23 399.3,477.78 399.8,478.30 400.3,478.79 400.8,479.25 401.3,479.68 401.8,480.07 402.3,480.43 402.8,480.76 403.3,481.04 403.8,481.29 404.3,481.50 404.8,481.66 405.3,481.79 405.8,481.87 406.3,481.90 406.8,481.90 407.3,481.84 407.8,481.75 408.3,481.61 408.8,481.44 409.3,481.22 409.8,480.97 410.3,480.69 410.8,480.39 411.3,480.06 411.8,479.71 412.3,479.34 412.8,478.96 413.3,478.57 413.8,478.17 414.3,477.76 414.8,477.35 415.3,476.93 415.8,476.51 416.3,476.08 416.8,475.65 417.3,475.21 417.8,474.76 418.3,474.30 418.8,473.84 419.3,473.36 419.8,472.87 420.3,472.38 420.8,471.87 421.3,471.35 421.8,470.82 422.3,470.27 422.8,469.71 423.3,469.14 423.8,468.55 424.3,467.94 424.8,467.32 425.3,466.69 425.8,466.03 426.3,465.36 426.8,464.66 427.3,463.95 427.8,463.22 428.3,462.47 428.8,461.69 429.3,460.90 429.8,460.09 430.3,459.26 430.8,458.42 431.3,457.56 431.8,456.70 432.3,455.84 432.8,454.98 433.3,454.13 433.8,453.28 434.3,452.46 434.8,451.65 435.3,450.86 435.8,450.09 436.3,449.36 436.8,448.65 437.3,447.96 437.8,447.31 438.3,446.68 438.8,446.07 439.3,445.49 439.8,444.93 440.3,444.40 440.8,443.88 441.3,443.38 441.8,442.90 442.3,442.44 442.8,441.99 443.3,441.55 443.8,441.12 444.3,440.71 444.8,440.30 445.3,439.90 445.8,439.51 446.3,439.12 446.8,438.73 447.3,438.35 447.8,437.98 448.3,437.61 448.8,437.24 449.3,436.88 449.8,436.52 450.3,436.17 450.8,435.82 451.3,435.48 451.8,435.14 452.3,434.81 452.8,434.49 453.3,434.18 453.8,433.87 454.3,433.56 454.8,433.27 455.3,432.98 455.8,432.70 456.3,432.42 456.8,432.15 457.3,431.89 457.8,431.63 458.3,431.38 458.8,431.13 459.3,430.89 459.8,430.66 460.3,430.43 460.8,430.20 461.3,429.99 461.8,429.77 462.3,429.57 462.8,429.36 463.3,429.17 463.8,428.98 464.3,428.79 464.8,428.61 465.3,428.44 465.8,428.27 466.3,428.12 466.8,427.96 467.3,427.82 467.8,427.68 468.3,427.54 468.8,427.42 469.3,427.30 469.8,427.19 470.3,427.09 470.8,426.99 471.3,426.91 471.8,426.83 472.3,426.76 472.8,426.70 473.3,426.64 473.8,426.59 474.3,426.56 474.8,426.53 475.3,426.50 475.8,426.48 476.3,426.47 476.8,426.47 477.3,426.47 477.8,426.48 478.3,426.50 478.8,426.52 479.3,426.54 479.8,426.57 480.3,426.61 480.8,426.65 481.3,426.69 481.8,426.75 482.3,426.80 482.8,426.87 483.3,426.94 483.8,427.02 484.3,427.10 484.8,427.19 485.3,427.29 485.8,427.40 486.3,427.51 486.8,427.63 487.3,427.76 487.8,427.90 488.3,428.05 488.8,428.21 489.3,428.37 489.8,428.55 490.3,428.73 490.8,428.92 491.3,429.13 491.8,429.34 492.3,429.56 492.8,429.79 493.3,430.03 493.8,430.28 494.3,430.54 494.8,430.81 495.3,431.08 495.8,431.37 496.3,431.66 496.8,431.96 497.3,432.26 497.8,432.58 498.3,432.90 498.8,433.22 499.3,433.55 499.8,433.89 500.3,434.24 500.8,434.59 501.3,434.94 501.8,435.30 502.3,435.66 502.8,436.03 503.3,436.41 503.8,436.78 504.3,437.16 504.8,437.55 505.3,437.93 505.8,438.32 506.3,438.71 506.8,439.11 507.3,439.51 507.8,439.92 508.3,440.32 508.8,440.74 509.3,441.16 509.8,441.58 510.3,442.01 510.8,442.45 511.3,442.89 511.8,443.34 512.3,443.80 512.8,444.27 513.3,444.74 513.8,445.22 514.3,445.70 514.8,446.19 515.3,446.69 515.8,447.19 516.3,447.70 516.8,448.20 517.3,448.72 517.8,449.23 518.3,449.75 518.8,450.27 519.3,450.79 519.8,451.31 520.3,451.83 520.8,452.35 521.3,452.87 521.8,453.38 522.3,453.89 522.8,454.40 523.3,454.91 523.8,455.41 524.3,455.91 524.8,456.40 525.3,456.89 525.8,457.37 526.3,457.85 526.8,458.32 527.3,458.78 527.8,459.24 528.3,459.69 528.8,460.14 529.3,460.59 529.8,461.03 530.3,461.48 530.8,461.92 531.3,462.36 531.8,462.81 532.3,463.25 532.8,463.70 533.3,464.14 533.8,464.59 534.3,465.03 534.8,465.46 535.3,465.89 535.8,466.30 536.3,466.71 536.8,467.10 537.3,467.47 537.8,467.83 538.3,468.16 538.8,468.47 539.3,468.75 539.8,469.00 540.3,469.22 540.8,469.41 541.3,469.57 541.8,469.69 542.3,469.77 542.8,469.82 543.3,469.83 543.8,469.81 544.3,469.75 544.8,469.66 545.3,469.53 545.8,469.37 546.3,469.18 546.8,468.96 547.3,468.71 547.8,468.43 548.3,468.13 548.8,467.80 549.3,467.44 549.8,467.06 550.3,466.66 550.8,466.23 551.3,465.79 551.8,465.32 552.3,464.84 552.8,464.34 553.3,463.82 553.8,463.28 554.3,462.73 554.8,462.17 555.3,461.59 555.8,461.00 556.3,460.40 556.8,459.79 557.3,459.17 557.8,458.54 558.3,457.91 558.8,457.27 559.3,456.63 559.8,455.98 560.3,455.33 560.8,454.68 561.3,454.02 561.8,453.37 562.3,452.72 562.8,452.06 563.3,451.42 563.8,450.77 564.3,450.14 564.8,449.50 565.3,448.88 565.8,448.26 566.3,447.65 566.8,447.06 567.3,446.47 567.8,445.89 568.3,445.33 568.8,444.78 569.3,444.25 569.8,443.73 570.3,443.23 570.8,442.74 571.3,442.27 571.8,441.81 572.3,441.37 572.8,440.94 573.3,440.52 573.8,440.11 574.3,439.71 574.8,439.32 575.3,438.93 575.8,438.55 576.3,438.18 576.8,437.80 577.3,437.43 577.8,437.06 578.3,436.70 578.8,436.34 579.3,435.98 579.8,435.63 580.3,435.28 580.8,434.94 581.3,434.61 581.8,434.29 582.3,433.98 582.8,433.68 583.3,433.39 583.8,433.11 584.3,432.85 584.8,432.61 585.3,432.38 585.8,432.16 586.3,431.97 586.8,431.80 587.3,431.64 587.8,431.51 588.3,431.40 588.8,431.31 589.3,431.24 589.8,431.19 590.3,431.16 590.8,431.16 591.3,431.18 591.8,431.21 592.3,431.27 592.8,431.35 593.3,431.45 593.8,431.57 594.3,431.71 594.8,431.87 595.3,432.05 595.8,432.26 596.3,432.49 596.8,432.74 597.3,433.02 597.8,433.32 598.3,433.65 598.8,434.00 599.3,434.38 599.8,434.78 600.3,435.20 600.8,435.65 601.3,436.12 601.8,436.60 602.3,437.11 602.8,437.62 603.3,438.15 603.8,438.69 604.3,439.24 604.8,439.80 605.3,440.36 605.8,440.93 606.3,441.50 606.8,442.08 607.3,442.66 607.8,443.25 608.3,443.84 608.8,444.44 609.3,445.05 609.8,445.66 610.3,446.28 610.8,446.90 611.3,447.52 611.8,448.15 612.3,448.78 612.8,449.41 613.3,450.05 613.8,450.68 614.3,451.31 614.8,451.95 615.3,452.58 615.8,453.20 616.3,453.83 616.8,454.45 617.3,455.06 617.8,455.67 618.3,456.27 618.8,456.87 619.3,457.46 619.8,458.04 620.3,458.60 620.8,459.16 621.3,459.71 621.8,460.25 622.3,460.77 622.8,461.28 623.3,461.77 623.8,462.25 624.3,462.72 624.8,463.16 625.3,463.59 625.8,464.01 626.3,464.40 626.8,464.77 627.3,465.13 627.8,465.46 628.3,465.77 628.8,466.06 629.3,466.32 629.8,466.56 630.3,466.78 630.8,466.97 631.3,467.13 631.8,467.27 632.3,467.39 632.8,467.47 633.3,467.53 633.8,467.57 634.3,467.58 634.8,467.56 635.3,467.52 635.8,467.46 636.3,467.37 636.8,467.26 637.3,467.13 637.8,466.97 638.3,466.80 638.8,466.61 639.3,466.40 639.8,466.17 640.3,465.93 640.8,465.67 641.3,465.40 641.8,465.11 642.3,464.81 642.8,464.49 643.3,464.16 643.8,463.83 644.3,463.48 644.8,463.12 645.3,462.75 645.8,462.38 646.3,461.99 646.8,461.61 647.3,461.21 647.8,460.81 648.3,460.41 648.8,460.00 649.3,459.59 649.8,459.18 650.3,458.77 650.8,458.35 651.3,457.94 651.8,457.53 652.3,457.12 652.8,456.71 653.3,456.31 653.8,455.91 654.3,455.52 654.8,455.13 655.3,454.75 655.8,454.37 656.3,454.01 656.8,453.65 657.3,453.31 657.8,452.97 658.3,452.65 658.8,452.33 659.3,452.03 659.8,451.75 660.3,451.48 660.8,451.22 661.3,450.98 661.8,450.75 662.3,450.55 662.8,450.36 663.3,450.19 663.8,450.04 664.3,449.92 664.8,449.81 665.3,449.72 665.8,449.66 666.3,449.62 666.8,449.60 667.3,449.61 667.8,449.64 668.3,449.69 668.8,449.77 669.3,449.87 669.8,450.00 670.3,450.14 670.8,450.32 671.3,450.51 671.8,450.72 672.3,450.96 672.8,451.21 673.3,451.49 673.8,451.78 674.3,452.09 674.8,452.42 675.3,452.77 675.8,453.13 676.3,453.51 676.8,453.90 677.3,454.31 677.8,454.73 678.3,455.17 678.8,455.62 679.3,456.07 679.8,456.54 680.3,457.02 680.8,457.51 681.3,458.01 681.8,458.52 682.3,459.04 682.8,459.56 683.3,460.09 683.8,460.62 684.3,461.16 684.8,461.70 685.3,462.25 685.8,462.80 686.3,463.36 686.8,463.91 687.3,464.47 687.8,465.02 688.3,465.58 688.8,466.13 689.3,466.69 689.8,467.24 690.3,467.79 690.8,468.33 691.3,468.87 691.8,469.41 692.3,469.94 692.8,470.46 693.3,470.98 693.8,471.49 694.3,471.99 694.8,472.48 695.3,472.96 695.8,473.43 696.3,473.89 696.8,474.34 697.3,474.78 697.8,475.21 698.3,475.62 698.8,476.01 699.3,476.39 699.8,476.76 700.3,477.11 700.8,477.44 701.3,477.76 701.8,478.06 702.3,478.34 702.8,478.59 703.3,478.83 703.8,479.05 704.3,479.24 704.8,479.41 705.3,479.56 705.8,479.68 706.3,479.77 706.8,479.84 707.3,479.87 707.8,479.87 708.3,479.84 708.8,479.77 709.3,479.67 709.8,479.53 710.3,479.35 710.8,479.14 711.3,478.88 711.8,478.59 712.3,478.27 712.8,477.91 713.3,477.51 713.8,477.09 714.3,476.64 714.8,476.16 715.3,475.65 715.8,475.12 716.3,474.56 716.8,473.99 717.3,473.39 717.8,472.77 718.3,472.14 718.8,471.48 719.3,470.80 719.8,470.10 720.3,469.38 720.8,468.63 721.3,467.86 721.8,467.07 722.3,466.25 722.8,465.41 723.3,464.55 723.8,463.67 724.3,462.77 724.8,461.86 725.3,460.93 725.8,459.99 726.3,459.05 726.8,458.10 727.3,457.16 727.8,456.21 728.3,455.27 728.8,454.33 729.3,453.41 729.8,452.49 730.3,451.58 730.8,450.68 731.3,449.80 731.8,448.92 732.3,448.05 732.8,447.19 733.3,446.33 733.8,445.47 734.3,444.62 734.8,443.77 735.3,442.92 735.8,442.07 736.3,441.23 736.8,440.38 737.3,439.53 737.8,438.69 738.3,437.85 738.8,437.02 739.3,436.18 739.8,435.36 740.3,434.54 740.8,433.72 741.3,432.92 741.8,432.12 742.3,431.34 742.8,430.57 743.3,429.80 743.8,429.06 744.3,428.32 744.8,427.60 745.3,426.90 745.8,426.21 746.3,425.54 746.8,424.89 747.3,424.26 747.8,423.65 748.3,423.06 748.8,422.50 749.3,421.96 749.8,421.44 750.3,420.95 750.8,420.49 751.3,420.05 751.8,419.64 752.3,419.26 752.8,418.91 753.3,418.60 753.8,418.31 754.3,418.07 754.8,417.85 755.3,417.68 755.8,417.54 756.3,417.45 756.8,417.40 757.3,417.39 757.8,417.42 758.3,417.50 758.8,417.63 759.3,417.80 759.8,418.01 760.3,418.26 760.8,418.55 761.3,418.88 761.8,419.24 762.3,419.64 762.8,420.07 763.3,420.52 763.8,421.01 764.3,421.53 764.8,422.08 765.3,422.67 765.8,423.29 766.3,423.94 766.8,424.64 767.3,425.38 767.8,426.15 768.3,426.97 768.8,427.82 769.3,428.70 769.8,429.62 770.3,430.57 770.8,431.55 771.3,432.55 771.8,433.56 772.3,434.59 772.8,435.63 773.3,436.67 773.8,437.71 774.3,438.74 774.8,439.77 775.3,440.78 775.8,441.78 776.3,442.75 776.8,443.69 777.3,444.60 777.8,445.47 778.3,446.30 778.8,447.09 779.3,447.82 779.8,448.50 780.3,449.11 780.8,449.67 781.3,450.15 781.8,450.55 782.3,450.88 782.8,451.12 783.3,451.28 783.8,451.34 784.3,451.31 784.8,451.19 785.3,450.96 785.8,450.64 786.3,450.22 786.8,449.71 787.3,449.11 787.8,448.42 788.3,447.65 788.8,446.80 789.3,445.88 789.8,444.90 790.3,443.85 790.8,442.76 791.3,441.62 791.8,440.44 792.3,439.24 792.8,438.01 793.3,436.76 793.8,435.51 794.3,434.25 794.8,433.00 795.3,431.75 795.8,430.53 796.3,429.32 796.8,428.15 797.3,427.01 797.8,425.91 798.3,424.85 798.8,423.83 799.3,422.85 799.8,421.92 800.3,421.03 800.8,420.18 801.3,419.36 801.8,418.58 802.3,417.83 802.8,417.10 803.3,416.40 803.8,415.72 804.3,415.06 804.8,414.41 805.3,413.79 805.8,413.18 806.3,412.59 806.8,412.02 807.3,411.46 807.8,410.93 808.3,410.41 808.8,409.91 809.3,409.44 809.8,408.99 810.3,408.56 810.8,408.16 811.3,407.78 811.8,407.42 812.3,407.10 812.8,406.80 813.3,406.54 813.8,406.30 814.3,406.09 814.8,405.92 815.3,405.78 815.8,405.67 816.3,405.60 816.8,405.56 817.3,405.56 817.8,405.59 818.3,405.66 818.8,405.76 819.3,405.90 819.8,406.08 820.3,406.29 820.8,406.54 821.3,406.83 821.8,407.14 822.3,407.49 822.8,407.88 823.3,408.30 823.8,408.74 824.3,409.22 824.8,409.73 825.3,410.27 825.8,410.83 826.3,411.43 826.8,412.05 827.3,412.70 827.8,413.37 828.3,414.06 828.8,414.79 829.3,415.53 829.8,416.30 830.3,417.08 830.8,417.89 831.3,418.72 831.8,419.57 832.3,420.43 832.8,421.32 833.3,422.22 833.8,423.14 834.3,424.07 834.8,425.01 835.3,425.98 835.8,426.95 836.3,427.94 836.8,428.93 837.3,429.94 837.8,430.96 838.3,431.99 838.8,433.03 839.3,434.07 839.8,435.12 840.3,436.18 840.8,437.24 841.3,438.31 841.8,439.38 842.3,440.46 842.8,441.53 843.3,442.61 843.8,443.69 844.3,444.77 844.8,445.85 845.3,446.93 845.8,448.00 846.3,449.08 846.8,450.14 847.3,451.21 847.8,452.27 848.3,453.32 848.8,454.37 849.3,455.40 849.8,456.43 850.3,457.45 850.8,458.46 851.3,459.47 851.8,460.45 852.3,461.43 852.8,462.39 853.3,463.34 853.8,464.28 854.3,465.20 854.8,466.10 855.3,466.99 855.8,467.86 856.3,468.71 856.8,469.54 857.3,470.36 857.8,471.15 858.3,471.92 858.8,472.67 859.3,473.39 859.8,474.09 860.3,474.77 860.8,475.42 861.3,476.05 861.8,476.65 862.3,477.22 862.8,477.76 863.3,478.28 863.8,478.76 864.3,479.22 864.8,479.64 865.3,480.03 865.8,480.39 866.3,480.71 866.8,481.00 867.3,481.26 867.8,481.48 868.3,481.67 868.8,481.82 869.3,481.94 869.8,482.03 870.3,482.08 870.8,482.10 871.3,482.08 871.8,482.04 872.3,481.97 872.8,481.87 873.3,481.75 873.8,481.60 874.3,481.43 874.8,481.24 875.3,481.03 875.8,480.80 876.3,480.56 876.8,480.30 877.3,480.02 877.8,479.72 878.3,479.41 878.8,479.08 879.3,478.73 879.8,478.36 880.3,477.97 880.8,477.55 881.3,477.10 881.8,476.63 882.3,476.13 882.8,475.60 883.3,475.04 883.8,474.45 884.3,473.83 884.8,473.18 885.3,472.51 885.8,471.81 886.3,471.09 886.8,470.36 887.3,469.60 887.8,468.82 888.3,468.04 888.8,467.24 889.3,466.43 889.8,465.61 890.3,464.79 890.8,463.97 891.3,463.14 891.8,462.31 892.3,461.49 892.8,460.68 893.3,459.87 893.8,459.07 894.3,458.28 894.8,457.51 895.3,456.76 895.8,456.02 896.3,455.30 896.8,454.61 897.3,453.94 897.8,453.30 898.3,452.69 898.8,452.11 899.3,451.57 899.8,451.06 900.3,450.59 900.8,450.16 901.3,449.77 901.8,449.42 902.3,449.11 902.8,448.85 903.3,448.64 903.8,448.47 904.3,448.34 904.8,448.26 905.3,448.22 905.8,448.22 906.3,448.25 906.8,448.32 907.3,448.43 907.8,448.57 908.3,448.73 908.8,448.93 909.3,449.15 909.8,449.39 910.3,449.65 910.8,449.93 911.3,450.23 911.8,450.54 912.3,450.86 912.8,451.20 913.3,451.55 913.8,451.90 914.3,452.27 914.8,452.63 915.3,453.00 915.8,453.37 916.3,453.75 916.8,454.11 917.3,454.48 917.8,454.84 918.3,455.19 918.8,455.54 919.3,455.87 919.8,456.19 920.3,456.50 920.8,456.79 921.3,457.06 921.8,457.32 922.3,457.55 922.8,457.76 923.3,457.95 923.8,458.12 924.3,458.26 924.8,458.38 925.3,458.47 925.8,458.54 926.3,458.58 926.8,458.60 927.3,458.60 927.8,458.57 928.3,458.52 928.8,458.45 929.3,458.36 929.8,458.26 930.3,458.13 930.8,457.99 931.3,457.83 931.8,457.65 932.3,457.46 932.8,457.26 933.3,457.04 933.8,456.81 934.3,456.56 934.8,456.30 935.3,456.03 935.8,455.74 936.3,455.45 936.8,455.14 937.3,454.82 937.8,454.49 938.3,454.15 938.8,453.80 939.3,453.44 939.8,453.07 940.3,452.70 940.8,452.31 941.3,451.92 941.8,451.52 942.3,451.11 942.8,450.70 943.3,450.28 943.8,449.86 944.3,449.43 944.8,448.99 945.3,448.56 945.8,448.11 946.3,447.67 946.8,447.22 947.3,446.77 947.8,446.31 948.3,445.86 948.8,445.40 949.3,444.94 949.8,444.49 L950.00,532.5 Z" fill="#0cc1ae"/><path d="M269.30,532.5 L269.30,528.00 269.8,524.06 270.3,520.16 270.8,516.31 271.3,512.55 271.8,508.91 272.3,505.39 272.8,502.02 273.3,498.81 273.8,495.74 274.3,492.84 274.8,490.08 275.3,487.47 275.8,485.00 276.3,482.65 276.8,480.41 277.3,478.29 277.8,476.26 278.3,474.32 278.8,472.47 279.3,470.71 279.8,469.02 280.3,467.42 280.8,465.89 281.3,464.44 281.8,463.05 282.3,461.74 282.8,460.50 283.3,459.33 283.8,458.22 284.3,457.18 284.8,456.21 285.3,455.30 285.8,454.46 286.3,453.68 286.8,452.96 287.3,452.31 287.8,451.71 288.3,451.18 288.8,450.70 289.3,450.28 289.8,449.90 290.3,449.58 290.8,449.31 291.3,449.07 291.8,448.88 292.3,448.73 292.8,448.62 293.3,448.54 293.8,448.50 294.3,448.49 294.8,448.51 295.3,448.57 295.8,448.67 296.3,448.79 296.8,448.95 297.3,449.15 297.8,449.38 298.3,449.64 298.8,449.93 299.3,450.25 299.8,450.61 300.3,450.99 300.8,451.41 301.3,451.85 301.8,452.32 302.3,452.82 302.8,453.34 303.3,453.89 303.8,454.45 304.3,455.05 304.8,455.66 305.3,456.29 305.8,456.94 306.3,457.61 306.8,458.30 307.3,459.00 307.8,459.71 308.3,460.44 308.8,461.19 309.3,461.94 309.8,462.71 310.3,463.48 310.8,464.26 311.3,465.05 311.8,465.85 312.3,466.65 312.8,467.45 313.3,468.26 313.8,469.07 314.3,469.88 314.8,470.69 315.3,471.50 315.8,472.31 316.3,473.11 316.8,473.91 317.3,474.71 317.8,475.50 318.3,476.28 318.8,477.05 319.3,477.81 319.8,478.56 320.3,479.30 320.8,480.03 321.3,480.74 321.8,481.44 322.3,482.12 322.8,482.79 323.3,483.44 323.8,484.07 324.3,484.67 324.8,485.26 325.3,485.83 325.8,486.37 326.3,486.88 326.8,487.37 327.3,487.84 327.8,488.28 328.3,488.69 328.8,489.06 329.3,489.41 329.8,489.73 330.3,490.01 330.8,490.26 331.3,490.48 331.8,490.65 332.3,490.80 332.8,490.90 333.3,490.96 333.8,490.99 334.3,490.98 334.8,490.92 335.3,490.83 335.8,490.69 336.3,490.52 336.8,490.31 337.3,490.06 337.8,489.77 338.3,489.45 338.8,489.09 339.3,488.70 339.8,488.28 340.3,487.83 340.8,487.35 341.3,486.85 341.8,486.32 342.3,485.77 342.8,485.19 343.3,484.59 343.8,483.98 344.3,483.35 344.8,482.70 345.3,482.05 345.8,481.37 346.3,480.69 346.8,480.00 347.3,479.30 347.8,478.60 348.3,477.89 348.8,477.18 349.3,476.47 349.8,475.76 350.3,475.06 350.8,474.36 351.3,473.66 351.8,472.97 352.3,472.29 352.8,471.62 353.3,470.96 353.8,470.32 354.3,469.69 354.8,469.08 355.3,468.49 355.8,467.92 356.3,467.37 356.8,466.85 357.3,466.35 357.8,465.88 358.3,465.43 358.8,465.02 359.3,464.63 359.8,464.28 360.3,463.97 360.8,463.69 361.3,463.44 361.8,463.23 362.3,463.06 362.8,462.93 363.3,462.83 363.8,462.77 364.3,462.75 364.8,462.76 365.3,462.80 365.8,462.88 366.3,462.99 366.8,463.12 367.3,463.29 367.8,463.49 368.3,463.71 368.8,463.96 369.3,464.23 369.8,464.53 370.3,464.85 370.8,465.19 371.3,465.56 371.8,465.95 372.3,466.35 372.8,466.78 373.3,467.22 373.8,467.68 374.3,468.16 374.8,468.65 375.3,469.16 375.8,469.69 376.3,470.23 376.8,470.78 377.3,471.34 377.8,471.92 378.3,472.51 378.8,473.10 379.3,473.71 379.8,474.32 380.3,474.95 380.8,475.58 381.3,476.21 381.8,476.86 382.3,477.50 382.8,478.16 383.3,478.81 383.8,479.47 384.3,480.13 384.8,480.79 385.3,481.45 385.8,482.11 386.3,482.76 386.8,483.42 387.3,484.08 387.8,484.73 388.3,485.37 388.8,486.01 389.3,486.65 389.8,487.28 390.3,487.90 390.8,488.51 391.3,489.12 391.8,489.71 392.3,490.30 392.8,490.87 393.3,491.43 393.8,491.98 394.3,492.52 394.8,493.04 395.3,493.55 395.8,494.04 396.3,494.51 396.8,494.97 397.3,495.41 397.8,495.83 398.3,496.23 398.8,496.62 399.3,496.98 399.8,497.31 400.3,497.63 400.8,497.92 401.3,498.20 401.8,498.44 402.3,498.66 402.8,498.86 403.3,499.03 403.8,499.18 404.3,499.31 404.8,499.41 405.3,499.49 405.8,499.55 406.3,499.60 406.8,499.62 407.3,499.63 407.8,499.63 408.3,499.61 408.8,499.59 409.3,499.55 409.8,499.51 410.3,499.45 410.8,499.39 411.3,499.32 411.8,499.25 412.3,499.17 412.8,499.08 413.3,498.99 413.8,498.89 414.3,498.78 414.8,498.67 415.3,498.56 415.8,498.43 416.3,498.31 416.8,498.17 417.3,498.04 417.8,497.89 418.3,497.74 418.8,497.59 419.3,497.43 419.8,497.27 420.3,497.11 420.8,496.93 421.3,496.76 421.8,496.58 422.3,496.40 422.8,496.21 423.3,496.02 423.8,495.82 424.3,495.62 424.8,495.42 425.3,495.21 425.8,495.00 426.3,494.79 426.8,494.57 427.3,494.35 427.8,494.13 428.3,493.91 428.8,493.68 429.3,493.45 429.8,493.22 430.3,492.98 430.8,492.74 431.3,492.50 431.8,492.26 432.3,492.02 432.8,491.77 433.3,491.52 433.8,491.27 434.3,491.02 434.8,490.77 435.3,490.52 435.8,490.26 436.3,490.00 436.8,489.75 437.3,489.49 437.8,489.23 438.3,488.97 438.8,488.71 439.3,488.45 439.8,488.19 440.3,487.92 440.8,487.66 441.3,487.40 441.8,487.14 442.3,486.88 442.8,486.61 443.3,486.35 443.8,486.09 444.3,485.83 444.8,485.57 445.3,485.31 445.8,485.05 446.3,484.80 446.8,484.54 447.3,484.28 447.8,484.03 448.3,483.78 448.8,483.53 449.3,483.28 449.8,483.03 450.3,482.78 450.8,482.54 451.3,482.30 451.8,482.06 452.3,481.82 452.8,481.58 453.3,481.35 453.8,481.12 454.3,480.89 454.8,480.67 455.3,480.45 455.8,480.23 456.3,480.01 456.8,479.80 457.3,479.59 457.8,479.38 458.3,479.18 458.8,478.98 459.3,478.78 459.8,478.59 460.3,478.40 460.8,478.22 461.3,478.04 461.8,477.87 462.3,477.69 462.8,477.53 463.3,477.37 463.8,477.21 464.3,477.06 464.8,476.91 465.3,476.76 465.8,476.63 466.3,476.49 466.8,476.37 467.3,476.24 467.8,476.13 468.3,476.02 468.8,475.91 469.3,475.81 469.8,475.72 470.3,475.63 470.8,475.55 471.3,475.48 471.8,475.41 472.3,475.34 472.8,475.29 473.3,475.24 473.8,475.20 474.3,475.16 474.8,475.13 475.3,475.11 475.8,475.09 476.3,475.08 476.8,475.08 477.3,475.08 477.8,475.09 478.3,475.11 478.8,475.13 479.3,475.15 479.8,475.19 480.3,475.22 480.8,475.27 481.3,475.32 481.8,475.37 482.3,475.43 482.8,475.49 483.3,475.56 483.8,475.64 484.3,475.71 484.8,475.80 485.3,475.88 485.8,475.98 486.3,476.07 486.8,476.17 487.3,476.28 487.8,476.39 488.3,476.50 488.8,476.61 489.3,476.73 489.8,476.86 490.3,476.98 490.8,477.11 491.3,477.25 491.8,477.38 492.3,477.52 492.8,477.67 493.3,477.81 493.8,477.96 494.3,478.11 494.8,478.27 495.3,478.42 495.8,478.58 496.3,478.74 496.8,478.91 497.3,479.07 497.8,479.24 498.3,479.41 498.8,479.58 499.3,479.76 499.8,479.93 500.3,480.11 500.8,480.29 501.3,480.47 501.8,480.65 502.3,480.83 502.8,481.02 503.3,481.20 503.8,481.39 504.3,481.57 504.8,481.76 505.3,481.95 505.8,482.14 506.3,482.33 506.8,482.52 507.3,482.71 507.8,482.89 508.3,483.08 508.8,483.27 509.3,483.46 509.8,483.65 510.3,483.84 510.8,484.03 511.3,484.22 511.8,484.41 512.3,484.59 512.8,484.78 513.3,484.96 513.8,485.15 514.3,485.33 514.8,485.51 515.3,485.69 515.8,485.87 516.3,486.05 516.8,486.23 517.3,486.40 517.8,486.58 518.3,486.75 518.8,486.92 519.3,487.08 519.8,487.25 520.3,487.42 520.8,487.58 521.3,487.74 521.8,487.90 522.3,488.06 522.8,488.23 523.3,488.39 523.8,488.55 524.3,488.72 524.8,488.89 525.3,489.06 525.8,489.23 526.3,489.41 526.8,489.59 527.3,489.77 527.8,489.95 528.3,490.14 528.8,490.33 529.3,490.51 529.8,490.70 530.3,490.90 530.8,491.08 531.3,491.27 531.8,491.46 532.3,491.65 532.8,491.83 533.3,492.01 533.8,492.18 534.3,492.35 534.8,492.52 535.3,492.68 535.8,492.83 536.3,492.98 536.8,493.12 537.3,493.25 537.8,493.38 538.3,493.49 538.8,493.60 539.3,493.69 539.8,493.77 540.3,493.84 540.8,493.90 541.3,493.94 541.8,493.97 542.3,493.98 542.8,493.97 543.3,493.95 543.8,493.91 544.3,493.84 544.8,493.76 545.3,493.66 545.8,493.54 546.3,493.40 546.8,493.25 547.3,493.07 547.8,492.88 548.3,492.67 548.8,492.44 549.3,492.20 549.8,491.95 550.3,491.68 550.8,491.40 551.3,491.12 551.8,490.82 552.3,490.51 552.8,490.20 553.3,489.88 553.8,489.55 554.3,489.22 554.8,488.88 555.3,488.53 555.8,488.18 556.3,487.82 556.8,487.45 557.3,487.08 557.8,486.70 558.3,486.30 558.8,485.90 559.3,485.49 559.8,485.07 560.3,484.64 560.8,484.21 561.3,483.76 561.8,483.31 562.3,482.86 562.8,482.40 563.3,481.94 563.8,481.48 564.3,481.02 564.8,480.56 565.3,480.10 565.8,479.65 566.3,479.20 566.8,478.76 567.3,478.32 567.8,477.89 568.3,477.46 568.8,477.05 569.3,476.64 569.8,476.23 570.3,475.83 570.8,475.44 571.3,475.05 571.8,474.66 572.3,474.28 572.8,473.90 573.3,473.52 573.8,473.15 574.3,472.77 574.8,472.40 575.3,472.04 575.8,471.67 576.3,471.31 576.8,470.96 577.3,470.60 577.8,470.26 578.3,469.92 578.8,469.59 579.3,469.26 579.8,468.95 580.3,468.64 580.8,468.34 581.3,468.05 581.8,467.77 582.3,467.51 582.8,467.25 583.3,467.01 583.8,466.78 584.3,466.56 584.8,466.36 585.3,466.18 585.8,466.00 586.3,465.85 586.8,465.71 587.3,465.59 587.8,465.48 588.3,465.39 588.8,465.32 589.3,465.27 589.8,465.24 590.3,465.22 590.8,465.22 591.3,465.23 591.8,465.27 592.3,465.31 592.8,465.38 593.3,465.46 593.8,465.55 594.3,465.66 594.8,465.78 595.3,465.91 595.8,466.06 596.3,466.21 596.8,466.38 597.3,466.57 597.8,466.76 598.3,466.96 598.8,467.18 599.3,467.40 599.8,467.63 600.3,467.88 600.8,468.13 601.3,468.39 601.8,468.66 602.3,468.93 602.8,469.22 603.3,469.51 603.8,469.81 604.3,470.11 604.8,470.42 605.3,470.73 605.8,471.05 606.3,471.38 606.8,471.71 607.3,472.04 607.8,472.38 608.3,472.71 608.8,473.06 609.3,473.40 609.8,473.75 610.3,474.10 610.8,474.45 611.3,474.80 611.8,475.15 612.3,475.51 612.8,475.86 613.3,476.21 613.8,476.56 614.3,476.91 614.8,477.26 615.3,477.60 615.8,477.95 616.3,478.29 616.8,478.63 617.3,478.96 617.8,479.29 618.3,479.62 618.8,479.94 619.3,480.26 619.8,480.57 620.3,480.87 620.8,481.17 621.3,481.47 621.8,481.75 622.3,482.03 622.8,482.30 623.3,482.57 623.8,482.82 624.3,483.07 624.8,483.31 625.3,483.53 625.8,483.75 626.3,483.96 626.8,484.16 627.3,484.34 627.8,484.52 628.3,484.68 628.8,484.83 629.3,484.97 629.8,485.10 630.3,485.21 630.8,485.31 631.3,485.39 631.8,485.46 632.3,485.51 632.8,485.54 633.3,485.56 633.8,485.56 634.3,485.54 634.8,485.50 635.3,485.44 635.8,485.36 636.3,485.26 636.8,485.14 637.3,485.00 637.8,484.83 638.3,484.65 638.8,484.45 639.3,484.23 639.8,483.99 640.3,483.74 640.8,483.46 641.3,483.18 641.8,482.87 642.3,482.56 642.8,482.23 643.3,481.88 643.8,481.53 644.3,481.16 644.8,480.79 645.3,480.40 645.8,480.01 646.3,479.61 646.8,479.20 647.3,478.79 647.8,478.37 648.3,477.94 648.8,477.52 649.3,477.09 649.8,476.66 650.3,476.22 650.8,475.79 651.3,475.36 651.8,474.93 652.3,474.50 652.8,474.07 653.3,473.65 653.8,473.23 654.3,472.82 654.8,472.41 655.3,472.01 655.8,471.62 656.3,471.24 656.8,470.86 657.3,470.50 657.8,470.15 658.3,469.81 658.8,469.48 659.3,469.17 659.8,468.87 660.3,468.58 660.8,468.31 661.3,468.06 661.8,467.83 662.3,467.61 662.8,467.41 663.3,467.24 663.8,467.08 664.3,466.94 664.8,466.83 665.3,466.74 665.8,466.67 666.3,466.63 666.8,466.61 667.3,466.61 667.8,466.64 668.3,466.69 668.8,466.77 669.3,466.87 669.8,466.99 670.3,467.14 670.8,467.31 671.3,467.50 671.8,467.71 672.3,467.95 672.8,468.20 673.3,468.47 673.8,468.76 674.3,469.07 674.8,469.40 675.3,469.75 675.8,470.11 676.3,470.48 676.8,470.87 677.3,471.28 677.8,471.70 678.3,472.13 678.8,472.57 679.3,473.03 679.8,473.50 680.3,473.97 680.8,474.46 681.3,474.96 681.8,475.46 682.3,475.97 682.8,476.49 683.3,477.02 683.8,477.55 684.3,478.08 684.8,478.62 685.3,479.17 685.8,479.72 686.3,480.27 686.8,480.82 687.3,481.37 687.8,481.92 688.3,482.47 688.8,483.02 689.3,483.57 689.8,484.12 690.3,484.67 690.8,485.21 691.3,485.74 691.8,486.28 692.3,486.80 692.8,487.32 693.3,487.84 693.8,488.34 694.3,488.84 694.8,489.33 695.3,489.81 695.8,490.28 696.3,490.73 696.8,491.18 697.3,491.62 697.8,492.04 698.3,492.45 698.8,492.84 699.3,493.22 699.8,493.58 700.3,493.93 700.8,494.26 701.3,494.58 701.8,494.87 702.3,495.15 702.8,495.41 703.3,495.64 703.8,495.86 704.3,496.06 704.8,496.23 705.3,496.38 705.8,496.51 706.3,496.62 706.8,496.70 707.3,496.76 707.8,496.80 708.3,496.82 708.8,496.81 709.3,496.79 709.8,496.74 710.3,496.67 710.8,496.58 711.3,496.47 711.8,496.34 712.3,496.19 712.8,496.02 713.3,495.84 713.8,495.64 714.3,495.42 714.8,495.18 715.3,494.93 715.8,494.67 716.3,494.39 716.8,494.09 717.3,493.78 717.8,493.46 718.3,493.12 718.8,492.77 719.3,492.41 719.8,492.03 720.3,491.65 720.8,491.25 721.3,490.84 721.8,490.43 722.3,490.00 722.8,489.56 723.3,489.12 723.8,488.66 724.3,488.20 724.8,487.73 725.3,487.26 725.8,486.77 726.3,486.28 726.8,485.79 727.3,485.29 727.8,484.78 728.3,484.27 728.8,483.76 729.3,483.24 729.8,482.72 730.3,482.20 730.8,481.67 731.3,481.15 731.8,480.62 732.3,480.09 732.8,479.56 733.3,479.03 733.8,478.50 734.3,477.97 734.8,477.44 735.3,476.91 735.8,476.39 736.3,475.87 736.8,475.35 737.3,474.83 737.8,474.32 738.3,473.81 738.8,473.31 739.3,472.81 739.8,472.32 740.3,471.84 740.8,471.36 741.3,470.88 741.8,470.42 742.3,469.96 742.8,469.51 743.3,469.07 743.8,468.64 744.3,468.22 744.8,467.81 745.3,467.41 745.8,467.02 746.3,466.64 746.8,466.27 747.3,465.92 747.8,465.58 748.3,465.25 748.8,464.93 749.3,464.63 749.8,464.34 750.3,464.07 750.8,463.82 751.3,463.57 751.8,463.35 752.3,463.14 752.8,462.95 753.3,462.77 753.8,462.62 754.3,462.48 754.8,462.36 755.3,462.25 755.8,462.17 756.3,462.10 756.8,462.05 757.3,462.02 757.8,462.00 758.3,462.00 758.8,462.02 759.3,462.05 759.8,462.09 760.3,462.15 760.8,462.22 761.3,462.30 761.8,462.39 762.3,462.49 762.8,462.60 763.3,462.73 763.8,462.86 764.3,462.99 764.8,463.14 765.3,463.29 765.8,463.45 766.3,463.61 766.8,463.78 767.3,463.96 767.8,464.14 768.3,464.32 768.8,464.50 769.3,464.69 769.8,464.88 770.3,465.07 770.8,465.27 771.3,465.46 771.8,465.65 772.3,465.84 772.8,466.03 773.3,466.22 773.8,466.41 774.3,466.59 774.8,466.77 775.3,466.95 775.8,467.12 776.3,467.29 776.8,467.45 777.3,467.60 777.8,467.75 778.3,467.89 778.8,468.02 779.3,468.15 779.8,468.26 780.3,468.37 780.8,468.47 781.3,468.56 781.8,468.63 782.3,468.70 782.8,468.75 783.3,468.80 783.8,468.83 784.3,468.85 784.8,468.86 785.3,468.86 785.8,468.85 786.3,468.84 786.8,468.81 787.3,468.77 787.8,468.72 788.3,468.67 788.8,468.60 789.3,468.53 789.8,468.45 790.3,468.37 790.8,468.28 791.3,468.18 791.8,468.08 792.3,467.97 792.8,467.85 793.3,467.73 793.8,467.61 794.3,467.48 794.8,467.35 795.3,467.21 795.8,467.07 796.3,466.93 796.8,466.78 797.3,466.63 797.8,466.48 798.3,466.33 798.8,466.17 799.3,466.02 799.8,465.86 800.3,465.71 800.8,465.55 801.3,465.39 801.8,465.23 802.3,465.07 802.8,464.92 803.3,464.76 803.8,464.61 804.3,464.46 804.8,464.31 805.3,464.16 805.8,464.02 806.3,463.87 806.8,463.74 807.3,463.60 807.8,463.47 808.3,463.34 808.8,463.22 809.3,463.10 809.8,462.99 810.3,462.88 810.8,462.78 811.3,462.69 811.8,462.60 812.3,462.51 812.8,462.44 813.3,462.37 813.8,462.31 814.3,462.26 814.8,462.22 815.3,462.19 815.8,462.17 816.3,462.16 816.8,462.16 817.3,462.18 817.8,462.21 818.3,462.25 818.8,462.31 819.3,462.38 819.8,462.47 820.3,462.58 820.8,462.70 821.3,462.84 821.8,463.00 822.3,463.17 822.8,463.36 823.3,463.56 823.8,463.78 824.3,464.01 824.8,464.26 825.3,464.52 825.8,464.80 826.3,465.09 826.8,465.39 827.3,465.71 827.8,466.04 828.3,466.38 828.8,466.73 829.3,467.09 829.8,467.47 830.3,467.85 830.8,468.25 831.3,468.65 831.8,469.07 832.3,469.49 832.8,469.92 833.3,470.36 833.8,470.81 834.3,471.26 834.8,471.73 835.3,472.20 835.8,472.67 836.3,473.15 836.8,473.64 837.3,474.13 837.8,474.63 838.3,475.13 838.8,475.64 839.3,476.15 839.8,476.66 840.3,477.18 840.8,477.70 841.3,478.22 841.8,478.74 842.3,479.27 842.8,479.79 843.3,480.32 843.8,480.85 844.3,481.37 844.8,481.90 845.3,482.43 845.8,482.95 846.3,483.48 846.8,484.00 847.3,484.52 847.8,485.03 848.3,485.55 848.8,486.06 849.3,486.57 849.8,487.07 850.3,487.57 850.8,488.06 851.3,488.55 851.8,489.03 852.3,489.51 852.8,489.98 853.3,490.44 853.8,490.90 854.3,491.35 854.8,491.79 855.3,492.23 855.8,492.65 856.3,493.07 856.8,493.47 857.3,493.87 857.8,494.26 858.3,494.63 858.8,495.00 859.3,495.35 859.8,495.70 860.3,496.03 860.8,496.34 861.3,496.65 861.8,496.94 862.3,497.22 862.8,497.49 863.3,497.74 863.8,497.98 864.3,498.20 864.8,498.40 865.3,498.59 865.8,498.77 866.3,498.93 866.8,499.07 867.3,499.19 867.8,499.29 868.3,499.38 868.8,499.44 869.3,499.49 869.8,499.51 870.3,499.52 870.8,499.50 871.3,499.46 871.8,499.39 872.3,499.30 872.8,499.19 873.3,499.05 873.8,498.89 874.3,498.70 874.8,498.50 875.3,498.27 875.8,498.02 876.3,497.75 876.8,497.46 877.3,497.15 877.8,496.82 878.3,496.47 878.8,496.11 879.3,495.73 879.8,495.34 880.3,494.93 880.8,494.51 881.3,494.08 881.8,493.63 882.3,493.18 882.8,492.72 883.3,492.24 883.8,491.76 884.3,491.28 884.8,490.78 885.3,490.29 885.8,489.78 886.3,489.28 886.8,488.77 887.3,488.26 887.8,487.75 888.3,487.24 888.8,486.73 889.3,486.22 889.8,485.71 890.3,485.21 890.8,484.72 891.3,484.22 891.8,483.74 892.3,483.26 892.8,482.79 893.3,482.33 893.8,481.88 894.3,481.43 894.8,481.00 895.3,480.59 895.8,480.18 896.3,479.79 896.8,479.42 897.3,479.06 897.8,478.72 898.3,478.39 898.8,478.08 899.3,477.80 899.8,477.53 900.3,477.28 900.8,477.06 901.3,476.85 901.8,476.67 902.3,476.51 902.8,476.37 903.3,476.25 903.8,476.15 904.3,476.06 904.8,476.00 905.3,475.95 905.8,475.91 906.3,475.88 906.8,475.86 907.3,475.84 907.8,475.83 908.3,475.83 908.8,475.83 909.3,475.83 909.8,475.83 910.3,475.84 910.8,475.84 911.3,475.85 911.8,475.85 912.3,475.86 912.8,475.86 913.3,475.87 913.8,475.88 914.3,475.88 914.8,475.89 915.3,475.89 915.8,475.90 916.3,475.91 916.8,475.91 917.3,475.92 917.8,475.93 918.3,475.93 918.8,475.94 919.3,475.95 919.8,475.95 920.3,475.96 920.8,475.96 921.3,475.97 921.8,475.97 922.3,475.97 922.8,475.97 923.3,475.97 923.8,475.97 924.3,475.97 924.8,475.96 925.3,475.94 925.8,475.92 926.3,475.89 926.8,475.85 927.3,475.81 927.8,475.75 928.3,475.67 928.8,475.59 929.3,475.49 929.8,475.38 930.3,475.25 930.8,475.10 931.3,474.95 931.8,474.77 932.3,474.58 932.8,474.38 933.3,474.17 933.8,473.94 934.3,473.69 934.8,473.44 935.3,473.17 935.8,472.89 936.3,472.59 936.8,472.29 937.3,471.97 937.8,471.65 938.3,471.31 938.8,470.97 939.3,470.61 939.8,470.25 940.3,469.88 940.8,469.50 941.3,469.11 941.8,468.72 942.3,468.32 942.8,467.91 943.3,467.50 943.8,467.08 944.3,466.66 944.8,466.23 945.3,465.80 945.8,465.36 946.3,464.92 946.8,464.48 947.3,464.03 947.8,463.59 948.3,463.14 948.8,462.69 949.3,462.23 949.8,461.78 L950.00,532.5 Z" fill="#6151bd"/><path d="M269.30,532.5 L269.30,532.50 269.8,528.80 270.3,525.13 270.8,521.54 271.3,518.05 271.8,514.70 272.3,511.52 272.8,508.52 273.3,505.71 273.8,503.11 274.3,500.72 274.8,498.53 275.3,496.53 275.8,494.71 276.3,493.04 276.8,491.52 277.3,490.12 277.8,488.83 278.3,487.63 278.8,486.50 279.3,485.44 279.8,484.44 280.3,483.49 280.8,482.60 281.3,481.75 281.8,480.94 282.3,480.17 282.8,479.44 283.3,478.75 283.8,478.09 284.3,477.46 284.8,476.87 285.3,476.30 285.8,475.76 286.3,475.25 286.8,474.76 287.3,474.31 287.8,473.87 288.3,473.47 288.8,473.10 289.3,472.75 289.8,472.44 290.3,472.15 290.8,471.90 291.3,471.67 291.8,471.48 292.3,471.32 292.8,471.18 293.3,471.08 293.8,471.01 294.3,470.97 294.8,470.96 295.3,470.98 295.8,471.03 296.3,471.10 296.8,471.20 297.3,471.32 297.8,471.47 298.3,471.64 298.8,471.84 299.3,472.06 299.8,472.30 300.3,472.56 300.8,472.84 301.3,473.14 301.8,473.46 302.3,473.80 302.8,474.15 303.3,474.52 303.8,474.90 304.3,475.31 304.8,475.72 305.3,476.15 305.8,476.59 306.3,477.04 306.8,477.51 307.3,477.98 307.8,478.47 308.3,478.96 308.8,479.47 309.3,479.98 309.8,480.49 310.3,481.02 310.8,481.55 311.3,482.08 311.8,482.62 312.3,483.16 312.8,483.71 313.3,484.26 313.8,484.81 314.3,485.35 314.8,485.90 315.3,486.45 315.8,487.00 316.3,487.54 316.8,488.09 317.3,488.62 317.8,489.16 318.3,489.69 318.8,490.21 319.3,490.73 319.8,491.24 320.3,491.74 320.8,492.23 321.3,492.71 321.8,493.19 322.3,493.65 322.8,494.10 323.3,494.54 323.8,494.96 324.3,495.38 324.8,495.77 325.3,496.16 325.8,496.52 326.3,496.87 326.8,497.21 327.3,497.52 327.8,497.82 328.3,498.09 328.8,498.35 329.3,498.59 329.8,498.80 330.3,498.99 330.8,499.16 331.3,499.30 331.8,499.42 332.3,499.51 332.8,499.57 333.3,499.61 333.8,499.61 334.3,499.59 334.8,499.53 335.3,499.44 335.8,499.32 336.3,499.17 336.8,498.98 337.3,498.77 337.8,498.52 338.3,498.24 338.8,497.94 339.3,497.61 339.8,497.25 340.3,496.86 340.8,496.45 341.3,496.02 341.8,495.56 342.3,495.09 342.8,494.60 343.3,494.09 343.8,493.56 344.3,493.02 344.8,492.47 345.3,491.91 345.8,491.33 346.3,490.75 346.8,490.16 347.3,489.56 347.8,488.96 348.3,488.35 348.8,487.74 349.3,487.14 349.8,486.53 350.3,485.92 350.8,485.32 351.3,484.73 351.8,484.14 352.3,483.55 352.8,482.98 353.3,482.42 353.8,481.87 354.3,481.33 354.8,480.81 355.3,480.30 355.8,479.81 356.3,479.34 356.8,478.89 357.3,478.47 357.8,478.06 358.3,477.68 358.8,477.33 359.3,477.00 359.8,476.70 360.3,476.43 360.8,476.19 361.3,475.98 361.8,475.81 362.3,475.67 362.8,475.56 363.3,475.49 363.8,475.45 364.3,475.44 364.8,475.48 365.3,475.54 365.8,475.64 366.3,475.77 366.8,475.93 367.3,476.13 367.8,476.36 368.3,476.61 368.8,476.90 369.3,477.21 369.8,477.55 370.3,477.92 370.8,478.31 371.3,478.73 371.8,479.17 372.3,479.63 372.8,480.12 373.3,480.63 373.8,481.16 374.3,481.70 374.8,482.27 375.3,482.85 375.8,483.45 376.3,484.07 376.8,484.70 377.3,485.35 377.8,486.00 378.3,486.68 378.8,487.36 379.3,488.05 379.8,488.76 380.3,489.47 380.8,490.19 381.3,490.92 381.8,491.65 382.3,492.39 382.8,493.14 383.3,493.89 383.8,494.64 384.3,495.39 384.8,496.15 385.3,496.90 385.8,497.66 386.3,498.41 386.8,499.16 387.3,499.91 387.8,500.65 388.3,501.39 388.8,502.13 389.3,502.85 389.8,503.57 390.3,504.29 390.8,504.99 391.3,505.68 391.8,506.36 392.3,507.03 392.8,507.69 393.3,508.33 393.8,508.96 394.3,509.57 394.8,510.17 395.3,510.75 395.8,511.31 396.3,511.85 396.8,512.38 397.3,512.88 397.8,513.36 398.3,513.82 398.8,514.26 399.3,514.67 399.8,515.06 400.3,515.42 400.8,515.75 401.3,516.06 401.8,516.34 402.3,516.59 402.8,516.81 403.3,517.00 403.8,517.15 404.3,517.28 404.8,517.36 405.3,517.42 405.8,517.44 406.3,517.42 406.8,517.36 407.3,517.27 407.8,517.14 408.3,516.97 408.8,516.76 409.3,516.52 409.8,516.24 410.3,515.93 410.8,515.58 411.3,515.21 411.8,514.79 412.3,514.35 412.8,513.88 413.3,513.38 413.8,512.86 414.3,512.30 414.8,511.73 415.3,511.13 415.8,510.51 416.3,509.86 416.8,509.20 417.3,508.52 417.8,507.83 418.3,507.12 418.8,506.39 419.3,505.65 419.8,504.90 420.3,504.14 420.8,503.37 421.3,502.59 421.8,501.81 422.3,501.02 422.8,500.23 423.3,499.43 423.8,498.63 424.3,497.83 424.8,497.03 425.3,496.23 425.8,495.43 426.3,494.64 426.8,493.84 427.3,493.04 427.8,492.24 428.3,491.44 428.8,490.64 429.3,489.83 429.8,489.01 430.3,488.19 430.8,487.36 431.3,486.52 431.8,485.68 432.3,484.82 432.8,483.95 433.3,483.08 433.8,482.20 434.3,481.32 434.8,480.43 435.3,479.54 435.8,478.64 436.3,477.75 436.8,476.87 437.3,475.98 437.8,475.11 438.3,474.24 438.8,473.38 439.3,472.53 439.8,471.69 440.3,470.87 440.8,470.06 441.3,469.27 441.8,468.49 442.3,467.72 442.8,466.97 443.3,466.24 443.8,465.51 444.3,464.81 444.8,464.11 445.3,463.43 445.8,462.75 446.3,462.09 446.8,461.44 447.3,460.80 447.8,460.17 448.3,459.55 448.8,458.94 449.3,458.35 449.8,457.76 450.3,457.19 450.8,456.63 451.3,456.08 451.8,455.55 452.3,455.03 452.8,454.53 453.3,454.04 453.8,453.57 454.3,453.11 454.8,452.67 455.3,452.25 455.8,451.84 456.3,451.45 456.8,451.08 457.3,450.72 457.8,450.38 458.3,450.06 458.8,449.76 459.3,449.47 459.8,449.19 460.3,448.94 460.8,448.69 461.3,448.47 461.8,448.25 462.3,448.05 462.8,447.86 463.3,447.69 463.8,447.53 464.3,447.38 464.8,447.24 465.3,447.11 465.8,446.99 466.3,446.88 466.8,446.79 467.3,446.70 467.8,446.62 468.3,446.54 468.8,446.48 469.3,446.42 469.8,446.37 470.3,446.32 470.8,446.28 471.3,446.25 471.8,446.22 472.3,446.20 472.8,446.18 473.3,446.17 473.8,446.16 474.3,446.15 474.8,446.15 475.3,446.15 475.8,446.16 476.3,446.18 476.8,446.21 477.3,446.24 477.8,446.28 478.3,446.33 478.8,446.40 479.3,446.47 479.8,446.56 480.3,446.65 480.8,446.76 481.3,446.89 481.8,447.02 482.3,447.16 482.8,447.32 483.3,447.49 483.8,447.67 484.3,447.86 484.8,448.06 485.3,448.27 485.8,448.49 486.3,448.72 486.8,448.96 487.3,449.21 487.8,449.47 488.3,449.73 488.8,450.01 489.3,450.29 489.8,450.58 490.3,450.88 490.8,451.19 491.3,451.51 491.8,451.83 492.3,452.17 492.8,452.51 493.3,452.86 493.8,453.22 494.3,453.59 494.8,453.97 495.3,454.36 495.8,454.76 496.3,455.16 496.8,455.58 497.3,456.00 497.8,456.43 498.3,456.87 498.8,457.32 499.3,457.78 499.8,458.25 500.3,458.73 500.8,459.21 501.3,459.70 501.8,460.20 502.3,460.71 502.8,461.22 503.3,461.74 503.8,462.27 504.3,462.81 504.8,463.36 505.3,463.91 505.8,464.47 506.3,465.04 506.8,465.62 507.3,466.20 507.8,466.80 508.3,467.40 508.8,468.01 509.3,468.63 509.8,469.25 510.3,469.89 510.8,470.53 511.3,471.17 511.8,471.83 512.3,472.49 512.8,473.16 513.3,473.83 513.8,474.52 514.3,475.20 514.8,475.90 515.3,476.60 515.8,477.31 516.3,478.03 516.8,478.76 517.3,479.50 517.8,480.25 518.3,481.01 518.8,481.78 519.3,482.56 519.8,483.35 520.3,484.16 520.8,484.97 521.3,485.79 521.8,486.63 522.3,487.47 522.8,488.31 523.3,489.16 523.8,490.01 524.3,490.86 524.8,491.71 525.3,492.55 525.8,493.39 526.3,494.22 526.8,495.04 527.3,495.85 527.8,496.65 528.3,497.44 528.8,498.21 529.3,498.96 529.8,499.70 530.3,500.42 530.8,501.12 531.3,501.82 531.8,502.49 532.3,503.16 532.8,503.81 533.3,504.45 533.8,505.08 534.3,505.70 534.8,506.30 535.3,506.90 535.8,507.47 536.3,508.03 536.8,508.57 537.3,509.08 537.8,509.57 538.3,510.03 538.8,510.46 539.3,510.85 539.8,511.20 540.3,511.51 540.8,511.78 541.3,512.01 541.8,512.20 542.3,512.34 542.8,512.44 543.3,512.50 543.8,512.52 544.3,512.50 544.8,512.45 545.3,512.37 545.8,512.26 546.3,512.13 546.8,511.97 547.3,511.79 547.8,511.59 548.3,511.37 548.8,511.14 549.3,510.89 549.8,510.63 550.3,510.36 550.8,510.08 551.3,509.79 551.8,509.50 552.3,509.19 552.8,508.88 553.3,508.57 553.8,508.26 554.3,507.94 554.8,507.61 555.3,507.29 555.8,506.95 556.3,506.61 556.8,506.27 557.3,505.91 557.8,505.55 558.3,505.17 558.8,504.78 559.3,504.38 559.8,503.96 560.3,503.54 560.8,503.09 561.3,502.63 561.8,502.16 562.3,501.67 562.8,501.18 563.3,500.66 563.8,500.14 564.3,499.61 564.8,499.07 565.3,498.51 565.8,497.95 566.3,497.38 566.8,496.81 567.3,496.23 567.8,495.64 568.3,495.05 568.8,494.45 569.3,493.85 569.8,493.25 570.3,492.65 570.8,492.05 571.3,491.45 571.8,490.85 572.3,490.25 572.8,489.65 573.3,489.06 573.8,488.47 574.3,487.89 574.8,487.31 575.3,486.74 575.8,486.17 576.3,485.62 576.8,485.07 577.3,484.53 577.8,484.01 578.3,483.49 578.8,482.99 579.3,482.50 579.8,482.02 580.3,481.56 580.8,481.11 581.3,480.68 581.8,480.27 582.3,479.87 582.8,479.49 583.3,479.13 583.8,478.80 584.3,478.48 584.8,478.18 585.3,477.91 585.8,477.66 586.3,477.43 586.8,477.23 587.3,477.05 587.8,476.90 588.3,476.77 588.8,476.66 589.3,476.59 589.8,476.53 590.3,476.50 590.8,476.50 591.3,476.52 591.8,476.56 592.3,476.62 592.8,476.71 593.3,476.81 593.8,476.94 594.3,477.08 594.8,477.24 595.3,477.42 595.8,477.62 596.3,477.83 596.8,478.06 597.3,478.31 597.8,478.57 598.3,478.84 598.8,479.13 599.3,479.43 599.8,479.75 600.3,480.07 600.8,480.41 601.3,480.76 601.8,481.12 602.3,481.50 602.8,481.88 603.3,482.27 603.8,482.67 604.3,483.08 604.8,483.49 605.3,483.92 605.8,484.35 606.3,484.78 606.8,485.23 607.3,485.68 607.8,486.13 608.3,486.59 608.8,487.05 609.3,487.51 609.8,487.98 610.3,488.45 610.8,488.92 611.3,489.39 611.8,489.87 612.3,490.34 612.8,490.82 613.3,491.29 613.8,491.76 614.3,492.23 614.8,492.70 615.3,493.17 615.8,493.63 616.3,494.09 616.8,494.54 617.3,494.99 617.8,495.44 618.3,495.88 618.8,496.31 619.3,496.74 619.8,497.16 620.3,497.57 620.8,497.97 621.3,498.37 621.8,498.75 622.3,499.13 622.8,499.49 623.3,499.85 623.8,500.19 624.3,500.52 624.8,500.84 625.3,501.15 625.8,501.44 626.3,501.72 626.8,501.99 627.3,502.24 627.8,502.48 628.3,502.70 628.8,502.90 629.3,503.09 629.8,503.25 630.3,503.41 630.8,503.54 631.3,503.65 631.8,503.74 632.3,503.81 632.8,503.86 633.3,503.88 633.8,503.88 634.3,503.85 634.8,503.80 635.3,503.72 635.8,503.61 636.3,503.47 636.8,503.31 637.3,503.12 637.8,502.90 638.3,502.66 638.8,502.39 639.3,502.09 639.8,501.77 640.3,501.43 640.8,501.06 641.3,500.67 641.8,500.27 642.3,499.84 642.8,499.40 643.3,498.94 643.8,498.46 644.3,497.97 644.8,497.47 645.3,496.95 645.8,496.42 646.3,495.88 646.8,495.33 647.3,494.78 647.8,494.21 648.3,493.65 648.8,493.07 649.3,492.49 649.8,491.91 650.3,491.33 650.8,490.75 651.3,490.17 651.8,489.59 652.3,489.01 652.8,488.44 653.3,487.87 653.8,487.31 654.3,486.76 654.8,486.21 655.3,485.67 655.8,485.15 656.3,484.63 656.8,484.13 657.3,483.64 657.8,483.17 658.3,482.71 658.8,482.27 659.3,481.85 659.8,481.45 660.3,481.06 660.8,480.70 661.3,480.36 661.8,480.05 662.3,479.76 662.8,479.49 663.3,479.25 663.8,479.04 664.3,478.86 664.8,478.70 665.3,478.58 665.8,478.48 666.3,478.41 666.8,478.37 667.3,478.35 667.8,478.37 668.3,478.41 668.8,478.48 669.3,478.57 669.8,478.69 670.3,478.83 670.8,478.99 671.3,479.18 671.8,479.39 672.3,479.62 672.8,479.87 673.3,480.14 673.8,480.42 674.3,480.73 674.8,481.05 675.3,481.39 675.8,481.74 676.3,482.11 676.8,482.50 677.3,482.90 677.8,483.31 678.3,483.74 678.8,484.17 679.3,484.62 679.8,485.08 680.3,485.55 680.8,486.03 681.3,486.52 681.8,487.01 682.3,487.52 682.8,488.03 683.3,488.54 683.8,489.07 684.3,489.59 684.8,490.12 685.3,490.66 685.8,491.20 686.3,491.74 686.8,492.28 687.3,492.82 687.8,493.37 688.3,493.91 688.8,494.45 689.3,494.99 689.8,495.53 690.3,496.07 690.8,496.60 691.3,497.13 691.8,497.65 692.3,498.17 692.8,498.68 693.3,499.19 693.8,499.68 694.3,500.17 694.8,500.65 695.3,501.13 695.8,501.59 696.3,502.04 696.8,502.48 697.3,502.91 697.8,503.32 698.3,503.72 698.8,504.11 699.3,504.48 699.8,504.84 700.3,505.18 700.8,505.51 701.3,505.82 701.8,506.11 702.3,506.38 702.8,506.63 703.3,506.87 703.8,507.08 704.3,507.27 704.8,507.45 705.3,507.60 705.8,507.73 706.3,507.83 706.8,507.92 707.3,507.98 707.8,508.03 708.3,508.05 708.8,508.06 709.3,508.04 709.8,508.01 710.3,507.96 710.8,507.90 711.3,507.81 711.8,507.72 712.3,507.60 712.8,507.48 713.3,507.34 713.8,507.18 714.3,507.02 714.8,506.84 715.3,506.65 715.8,506.45 716.3,506.23 716.8,506.01 717.3,505.77 717.8,505.52 718.3,505.27 718.8,505.00 719.3,504.72 719.8,504.44 720.3,504.15 720.8,503.84 721.3,503.53 721.8,503.22 722.3,502.89 722.8,502.56 723.3,502.22 723.8,501.87 724.3,501.52 724.8,501.16 725.3,500.80 725.8,500.43 726.3,500.06 726.8,499.68 727.3,499.30 727.8,498.91 728.3,498.53 728.8,498.13 729.3,497.74 729.8,497.34 730.3,496.94 730.8,496.54 731.3,496.14 731.8,495.74 732.3,495.34 732.8,494.93 733.3,494.53 733.8,494.12 734.3,493.72 734.8,493.32 735.3,492.92 735.8,492.52 736.3,492.12 736.8,491.72 737.3,491.33 737.8,490.94 738.3,490.55 738.8,490.17 739.3,489.79 739.8,489.42 740.3,489.05 740.8,488.68 741.3,488.32 741.8,487.97 742.3,487.62 742.8,487.28 743.3,486.94 743.8,486.61 744.3,486.29 744.8,485.98 745.3,485.67 745.8,485.38 746.3,485.09 746.8,484.81 747.3,484.54 747.8,484.28 748.3,484.03 748.8,483.79 749.3,483.56 749.8,483.34 750.3,483.13 750.8,482.94 751.3,482.75 751.8,482.58 752.3,482.42 752.8,482.28 753.3,482.15 753.8,482.03 754.3,481.93 754.8,481.85 755.3,481.78 755.8,481.73 756.3,481.70 756.8,481.70 757.3,481.72 757.8,481.76 758.3,481.83 758.8,481.93 759.3,482.06 759.8,482.22 760.3,482.42 760.8,482.64 761.3,482.89 761.8,483.17 762.3,483.48 762.8,483.82 763.3,484.19 763.8,484.58 764.3,485.00 764.8,485.44 765.3,485.89 765.8,486.37 766.3,486.87 766.8,487.38 767.3,487.90 767.8,488.44 768.3,488.99 768.8,489.55 769.3,490.12 769.8,490.69 770.3,491.26 770.8,491.84 771.3,492.42 771.8,493.00 772.3,493.58 772.8,494.16 773.3,494.72 773.8,495.29 774.3,495.84 774.8,496.38 775.3,496.91 775.8,497.43 776.3,497.93 776.8,498.42 777.3,498.88 777.8,499.33 778.3,499.75 778.8,500.16 779.3,500.53 779.8,500.88 780.3,501.20 780.8,501.49 781.3,501.75 781.8,501.97 782.3,502.16 782.8,502.31 783.3,502.41 783.8,502.48 784.3,502.50 784.8,502.47 785.3,502.39 785.8,502.27 786.3,502.09 786.8,501.86 787.3,501.58 787.8,501.25 788.3,500.86 788.8,500.43 789.3,499.95 789.8,499.42 790.3,498.85 790.8,498.23 791.3,497.58 791.8,496.88 792.3,496.14 792.8,495.37 793.3,494.57 793.8,493.73 794.3,492.86 794.8,491.97 795.3,491.05 795.8,490.11 796.3,489.15 796.8,488.17 797.3,487.17 797.8,486.15 798.3,485.13 798.8,484.09 799.3,483.04 799.8,481.99 800.3,480.93 800.8,479.87 801.3,478.81 801.8,477.75 802.3,476.69 802.8,475.64 803.3,474.60 803.8,473.56 804.3,472.54 804.8,471.53 805.3,470.54 805.8,469.56 806.3,468.61 806.8,467.68 807.3,466.77 807.8,465.89 808.3,465.03 808.8,464.21 809.3,463.42 809.8,462.66 810.3,461.94 810.8,461.26 811.3,460.61 811.8,460.01 812.3,459.46 812.8,458.95 813.3,458.49 813.8,458.07 814.3,457.71 814.8,457.39 815.3,457.12 815.8,456.91 816.3,456.74 816.8,456.61 817.3,456.53 817.8,456.50 818.3,456.50 818.8,456.54 819.3,456.62 819.8,456.73 820.3,456.87 820.8,457.04 821.3,457.23 821.8,457.46 822.3,457.70 822.8,457.98 823.3,458.27 823.8,458.59 824.3,458.93 824.8,459.29 825.3,459.67 825.8,460.07 826.3,460.50 826.8,460.94 827.3,461.40 827.8,461.87 828.3,462.37 828.8,462.88 829.3,463.41 829.8,463.96 830.3,464.51 830.8,465.09 831.3,465.68 831.8,466.28 832.3,466.90 832.8,467.52 833.3,468.16 833.8,468.82 834.3,469.48 834.8,470.15 835.3,470.83 835.8,471.53 836.3,472.23 836.8,472.94 837.3,473.65 837.8,474.38 838.3,475.11 838.8,475.84 839.3,476.59 839.8,477.33 840.3,478.09 840.8,478.84 841.3,479.60 841.8,480.36 842.3,481.12 842.8,481.89 843.3,482.66 843.8,483.42 844.3,484.19 844.8,484.96 845.3,485.72 845.8,486.49 846.3,487.25 846.8,488.01 847.3,488.76 847.8,489.52 848.3,490.26 848.8,491.01 849.3,491.75 849.8,492.48 850.3,493.20 850.8,493.92 851.3,494.63 851.8,495.33 852.3,496.03 852.8,496.71 853.3,497.39 853.8,498.05 854.3,498.71 854.8,499.35 855.3,499.98 855.8,500.60 856.3,501.20 856.8,501.79 857.3,502.37 857.8,502.93 858.3,503.48 858.8,504.01 859.3,504.53 859.8,505.03 860.3,505.51 860.8,505.97 861.3,506.42 861.8,506.84 862.3,507.25 862.8,507.64 863.3,508.00 863.8,508.34 864.3,508.67 864.8,508.97 865.3,509.25 865.8,509.50 866.3,509.73 866.8,509.94 867.3,510.12 867.8,510.27 868.3,510.40 868.8,510.51 869.3,510.58 869.8,510.63 870.3,510.66 870.8,510.65 871.3,510.62 871.8,510.57 872.3,510.49 872.8,510.38 873.3,510.24 873.8,510.09 874.3,509.90 874.8,509.70 875.3,509.47 875.8,509.22 876.3,508.95 876.8,508.66 877.3,508.35 877.8,508.02 878.3,507.67 878.8,507.31 879.3,506.93 879.8,506.54 880.3,506.13 880.8,505.71 881.3,505.28 881.8,504.83 882.3,504.38 882.8,503.92 883.3,503.44 883.8,502.96 884.3,502.48 884.8,501.98 885.3,501.49 885.8,500.98 886.3,500.48 886.8,499.97 887.3,499.46 887.8,498.95 888.3,498.44 888.8,497.93 889.3,497.42 889.8,496.91 890.3,496.41 890.8,495.92 891.3,495.42 891.8,494.94 892.3,494.46 892.8,493.99 893.3,493.53 893.8,493.08 894.3,492.63 894.8,492.20 895.3,491.79 895.8,491.38 896.3,490.99 896.8,490.62 897.3,490.26 897.8,489.92 898.3,489.59 898.8,489.28 899.3,489.00 899.8,488.73 900.3,488.48 900.8,488.26 901.3,488.06 901.8,487.88 902.3,487.73 902.8,487.61 903.3,487.51 903.8,487.43 904.3,487.39 904.8,487.37 905.3,487.39 905.8,487.43 906.3,487.50 906.8,487.60 907.3,487.73 907.8,487.88 908.3,488.06 908.8,488.26 909.3,488.49 909.8,488.74 910.3,489.02 910.8,489.31 911.3,489.62 911.8,489.94 912.3,490.28 912.8,490.63 913.3,490.99 913.8,491.35 914.3,491.73 914.8,492.11 915.3,492.49 915.8,492.88 916.3,493.26 916.8,493.64 917.3,494.02 917.8,494.39 918.3,494.76 918.8,495.12 919.3,495.46 919.8,495.79 920.3,496.11 920.8,496.41 921.3,496.69 921.8,496.96 922.3,497.20 922.8,497.42 923.3,497.61 923.8,497.78 924.3,497.92 924.8,498.04 925.3,498.12 925.8,498.18 926.3,498.20 926.8,498.19 927.3,498.15 927.8,498.08 928.3,497.98 928.8,497.85 929.3,497.69 929.8,497.50 930.3,497.28 930.8,497.04 931.3,496.76 931.8,496.46 932.3,496.13 932.8,495.78 933.3,495.40 933.8,495.00 934.3,494.58 934.8,494.13 935.3,493.66 935.8,493.17 936.3,492.66 936.8,492.13 937.3,491.58 937.8,491.02 938.3,490.43 938.8,489.83 939.3,489.21 939.8,488.58 940.3,487.93 940.8,487.27 941.3,486.60 941.8,485.91 942.3,485.21 942.8,484.50 943.3,483.78 943.8,483.05 944.3,482.32 944.8,481.57 945.3,480.82 945.8,480.06 946.3,479.29 946.8,478.52 947.3,477.74 947.8,476.96 948.3,476.18 948.8,475.39 949.3,474.61 949.8,473.82 L950.00,532.5 Z" fill="#cc3663"/></svg>
<div class="r" style="left:261.7px;top:531.5px;width:688.3px;height:2px;background:#aab1b1;"></div>
<div class="t" style="left:248.5px;width:30px;text-align:center;top:542.65px;font-size:8.3px;line-height:8.3px;color:#515e5f">1</div>
<div class="t" style="left:267.3px;width:30px;text-align:center;top:542.65px;font-size:8.3px;line-height:8.3px;color:#515e5f">2</div>
<div class="t" style="left:287.2px;width:30px;text-align:center;top:542.65px;font-size:8.3px;line-height:8.3px;color:#515e5f">3</div>
<div class="t" style="left:307.0px;width:30px;text-align:center;top:542.65px;font-size:8.3px;line-height:8.3px;color:#515e5f">4</div>
<div class="t" style="left:326.8px;width:30px;text-align:center;top:542.65px;font-size:8.3px;line-height:8.3px;color:#515e5f">5</div>
<div class="t" style="left:346.6px;width:30px;text-align:center;top:542.65px;font-size:8.3px;line-height:8.3px;color:#515e5f">6</div>
<div class="t" style="left:366.5px;width:30px;text-align:center;top:542.65px;font-size:8.3px;line-height:8.3px;color:#515e5f">7</div>
<div class="t" style="left:385.9px;width:30px;text-align:center;top:542.65px;font-size:8.3px;line-height:8.3px;color:#515e5f">8</div>
<div class="t" style="left:405.8px;width:30px;text-align:center;top:542.65px;font-size:8.3px;line-height:8.3px;color:#515e5f">9</div>
<div class="t" style="left:427.3px;width:30px;text-align:center;top:542.65px;font-size:8.3px;line-height:8.3px;color:#515e5f">10</div>
<div class="t" style="left:449.8px;width:30px;text-align:center;top:542.65px;font-size:8.3px;line-height:8.3px;color:#515e5f">11</div>
<div class="t" style="left:472.7px;width:30px;text-align:center;top:542.65px;font-size:8.3px;line-height:8.3px;color:#515e5f">12</div>
<div class="t" style="left:496.0px;width:30px;text-align:center;top:542.65px;font-size:8.3px;line-height:8.3px;color:#515e5f">13</div>
<div class="t" style="left:519.6px;width:30px;text-align:center;top:542.65px;font-size:8.3px;line-height:8.3px;color:#515e5f">14</div>
<div class="t" style="left:542.8px;width:30px;text-align:center;top:542.65px;font-size:8.3px;line-height:8.3px;color:#515e5f">15</div>
<div class="t" style="left:566.4px;width:30px;text-align:center;top:542.65px;font-size:8.3px;line-height:8.3px;color:#515e5f">16</div>
<div class="t" style="left:589.2px;width:30px;text-align:center;top:542.65px;font-size:8.3px;line-height:8.3px;color:#515e5f">17</div>
<div class="t" style="left:612.4px;width:30px;text-align:center;top:542.65px;font-size:8.3px;line-height:8.3px;color:#515e5f">18</div>
<div class="t" style="left:636.0px;width:30px;text-align:center;top:542.65px;font-size:8.3px;line-height:8.3px;color:#515e5f">19</div>
<div class="t" style="left:660.2px;width:30px;text-align:center;top:542.65px;font-size:8.3px;line-height:8.3px;color:#515e5f">20</div>
<div class="t" style="left:684.5px;width:30px;text-align:center;top:542.65px;font-size:8.3px;line-height:8.3px;color:#515e5f">21</div>
<div class="t" style="left:708.1px;width:30px;text-align:center;top:542.65px;font-size:8.3px;line-height:8.3px;color:#515e5f">22</div>
<div class="t" style="left:732.7px;width:30px;text-align:center;top:542.65px;font-size:8.3px;line-height:8.3px;color:#515e5f">23</div>
<div class="t" style="left:757.3px;width:30px;text-align:center;top:542.65px;font-size:8.3px;line-height:8.3px;color:#515e5f">24</div>
<div class="t" style="left:782.3px;width:30px;text-align:center;top:542.65px;font-size:8.3px;line-height:8.3px;color:#515e5f">25</div>
<div class="t" style="left:806.9px;width:30px;text-align:center;top:542.65px;font-size:8.3px;line-height:8.3px;color:#515e5f">26</div>
<div class="t" style="left:831.8px;width:30px;text-align:center;top:542.65px;font-size:8.3px;line-height:8.3px;color:#515e5f">27</div>
<div class="t" style="left:856.1px;width:30px;text-align:center;top:542.65px;font-size:8.3px;line-height:8.3px;color:#515e5f">28</div>
<div class="t" style="left:881.0px;width:30px;text-align:center;top:542.65px;font-size:8.3px;line-height:8.3px;color:#515e5f">29</div>
<div class="t" style="left:905.7px;width:30px;text-align:center;top:542.65px;font-size:8.3px;line-height:8.3px;color:#515e5f">30</div>
<div class="t" style="left:930.3px;width:30px;text-align:center;top:542.65px;font-size:8.3px;line-height:8.3px;color:#515e5f">31</div>
<div class="t" style="left:249.2px;width:30px;text-align:center;top:553.25px;font-size:8.3px;line-height:8.3px;color:#515e5f">Dec</div>
<div class="r" style="left:463.8px;top:574px;width:8.4px;height:8.3px;background:#0cc1ae;border-radius:2px"></div>
<div class="t" style="left:478.2px;top:573.38px;font-size:9.43px;line-height:9.43px;font-weight:400;color:#515e5f;letter-spacing:0px;transform:scaleX(1.0927);">Twitter</div>
<div class="r" style="left:525.5px;top:574px;width:8.4px;height:8.3px;background:#6151bd;border-radius:2px"></div>
<div class="t" style="left:539.8px;top:573.38px;font-size:9.43px;line-height:9.43px;font-weight:400;color:#515e5f;letter-spacing:0px;transform:scaleX(1.0189);">Facebook</div>
<div class="r" style="left:599.4px;top:574px;width:8.4px;height:8.3px;background:#cc3663;border-radius:2px"></div>
<div class="t" style="left:613.6px;top:573.38px;font-size:9.43px;line-height:9.43px;font-weight:400;color:#515e5f;letter-spacing:0px;transform:scaleX(1.0474);">Instagram</div>
<div class="r" style="left:674.6px;top:574px;width:8.4px;height:8.3px;background:#fdc723;border-radius:2px"></div>
<div class="t" style="left:689.3px;top:573.38px;font-size:9.43px;line-height:9.43px;font-weight:400;color:#515e5f;letter-spacing:0px;transform:scaleX(1.0267);">LinkedIn</div>
<div class="r" style="left:239.3px;top:606.3px;width:710.2px;height:60px;border:1px solid #e3e6e6;border-radius:4px;box-sizing:border-box"></div>
<div class="t" style="left:250.9px;top:618.98px;font-size:9.43px;line-height:9.43px;font-weight:400;color:#515e5f;letter-spacing:0px;transform:scaleX(0.8826);">Audience Metrics</div>
<div class="t" style="left:797.4px;top:618.98px;font-size:9.43px;line-height:9.43px;font-weight:400;color:#515e5f;letter-spacing:0px;transform:scaleX(0.9138);">Totals</div>
<div class="t" style="left:901.8px;top:618.98px;font-size:9.43px;line-height:9.43px;font-weight:400;color:#515e5f;letter-spacing:0px;transform:scaleX(0.8445);">% Change</div>
<div class="r" style="left:210px;top:623px;width:768px;height:1px;background:#dcdfdf;"></div>
<svg class="r" style="left:0px;top:0px" width="46" height="46" viewBox="0 0 46 46"><defs><clipPath id="lf"><path d="M31.6 12 L31.6 20.8 Q31.6 29.2 23.4 29.2 L19.2 29.3 L14.4 33.8 L14.1 29 L14.1 21 Q14.1 12 22.8 12 Z"/></clipPath></defs><g clip-path="url(#lf)"><rect x="13" y="11" width="20" height="24" fill="#5bcb5b"/><path d="M13 11 L21.7 11 L21.7 21.3 L13 29.9 Z" fill="#16a84a"/><path d="M21.7 21.3 L31.6 11.5 L33 11.5 L33 22.3 L21.7 22.3 Z" fill="#72db69"/><path d="M13 29 L14.4 34 L19.4 29.2 Z" fill="#52c45a"/></g></svg>
<div class="r" style="left:11.3px;top:56.8px;width:22.8px;height:22.9px;background:#364141;border-radius:4px;"></div>
<svg class="r" style="left:0px;top:0px" width="46" height="90" viewBox="0 0 46 90"><path d="M17 64.6 Q17 63.8 17.8 63.8 L21.2 63.8 L22.6 65.2 L27.8 65.2 Q28.6 65.2 28.6 66 L28.6 71.8 Q28.6 72.6 27.8 72.6 L17.8 72.6 Q17 72.6 17 71.8 Z" fill="#7b6bee"/></svg>
<svg class="r" style="left:0px;top:90px" width="46" height="30" viewBox="0 0 46 30"><path d="M17.54 21.8 A6.05 6.05 0 1 1 28.16 21.8 Z" fill="#fff"/><path d="M22.7 19.4 L25.7 16.2" stroke="#212a2b" stroke-width="1.1" stroke-linecap="round"/><circle cx="22.7" cy="19.5" r="1.15" fill="#212a2b"/></svg>
<svg class="r" style="left:0px;top:130px" width="46" height="25" viewBox="0 0 46 25"><path d="M19.8 8.7 L26 8.7 Q26.6 8.7 26.9 9.2 L28.9 12.2 L28.9 15.4 Q28.9 16 28.3 16 L17.5 16 Q16.9 16 16.9 15.4 L16.9 12.2 L18.9 9.2 Q19.2 8.7 19.8 8.7 Z" fill="#fff"/><path d="M19.9 10.1 L25.9 10.1 L27.1 11.8 L24.5 11.8 Q24.1 13.5 22.9 13.5 Q21.7 13.5 21.3 11.8 L18.7 11.8 Z" fill="#212a2b"/></svg>
<svg class="r" style="left:0px;top:165px" width="46" height="22" viewBox="0 0 46 22"><path d="M18.9 5.8 L26.4 5.8 Q26.7 5.8 26.7 6.2 L26.7 7.1 L24.9 7.6 L24.9 9.6 Q25.2 11 27.1 11.8 L27.1 13.3 Q27.1 13.7 26.7 13.7 L18.6 13.7 Q18.2 13.7 18.2 13.3 L18.2 11.8 Q20.3 11 20.6 9.6 L20.6 7.6 L18.6 7.1 L18.6 6.2 Q18.6 5.8 18.9 5.8 Z" fill="#fff"/><path d="M21.9 13.5 L23.6 13.5 L23.1 16.9 L22.4 16.9 Z" fill="#fff"/></svg>
<svg class="r" style="left:0px;top:200px" width="46" height="20" viewBox="0 0 46 20"><rect x="17" y="5.6" width="2" height="2" rx="0.5" fill="#fff"/><rect x="17" y="9.2" width="2" height="2" rx="0.5" fill="#fff"/><rect x="17" y="12.8" width="2" height="2" rx="0.5" fill="#fff"/><rect x="19.9" y="5.6" width="8.7" height="2" rx="0.6" fill="#fff"/><rect x="19.9" y="9.2" width="8.7" height="2" rx="0.6" fill="#fff"/><rect x="19.9" y="12.8" width="8.7" height="2" rx="0.6" fill="#fff"/></svg>
<svg class="r" style="left:0px;top:230px" width="46" height="25" viewBox="0 0 46 25"><path d="M16.7 15.2 L28.4 8.9 L20.5 16.5 Z" fill="#fff"/><path d="M21 17.2 L28.4 9.5 L25.2 18.6 L21.3 20.7 Z" fill="#fff"/></svg>
<svg class="r" style="left:0px;top:0px" width="46" height="300" viewBox="0 0 46 300"><rect x="17.450000000000003" y="275.4" width="1.3" height="7.2" rx="0.5" fill="#fff"/><rect x="19.7" y="276.8" width="1.2" height="4.4" rx="0.5" fill="#fff"/><rect x="21.7" y="273.2" width="1.4" height="11.6" rx="0.5" fill="#fff"/><rect x="23.849999999999998" y="274.9" width="1.1" height="8.2" rx="0.5" fill="#fff"/><rect x="25.55" y="275.7" width="1.1" height="6.6" rx="0.5" fill="#fff"/><rect x="27.05" y="276.8" width="1.1" height="4.4" rx="0.5" fill="#fff"/></svg>
<div class="r" style="left:5.8px;top:296px;width:34px;height:34px;border-radius:50%;background:#515e5f"></div>
<svg class="r" style="left:0px;top:300px" width="46" height="20" viewBox="0 0 46 20"><rect x="17" y="12.5" width="2.7" height="4.3" rx="0.5" fill="#fff"/><rect x="21.1" y="11" width="2.8" height="5.8" rx="0.5" fill="#fff"/><rect x="25.7" y="9.2" width="2.9" height="7.6" rx="0.5" fill="#fff"/></svg>
<svg class="r" style="left:0px;top:335px" width="46" height="22" viewBox="0 0 46 22"><rect x="22.15" y="6.4" width="0.9" height="3.2" fill="#fff"/><circle cx="22.6" cy="6.5" r="0.8" fill="#fff"/><rect x="17.9" y="9.2" width="9.9" height="8.9" rx="1.1" fill="#fff"/><rect x="16.9" y="11.4" width="1.6" height="4.6" rx="0.4" fill="#fff"/><rect x="27.2" y="11.4" width="1.9" height="4.6" rx="0.4" fill="#fff"/><path d="M19.6 12.6 L20.6 11.6 L21.6 12.6 M23.7 12.6 L24.7 11.6 L25.7 12.6" stroke="#212a2b" stroke-width="0.9" fill="none"/><path d="M21.4 14 L23.9 14 Q23.8 15.9 22.65 15.9 Q21.5 15.9 21.4 14 Z" fill="#212a2b"/></svg>
<svg class="r" style="left:0px;top:370px" width="46" height="22" viewBox="0 0 46 22"><path d="M22.8 5.6 L24.5 9.2 L28.4 9.6 L25.5 12.3 L26.3 16.2 L22.8 14.2 L19.3 16.2 L20.1 12.3 L17.2 9.6 L21.1 9.2 Z" fill="none" stroke="#fff" stroke-width="1.2" stroke-linejoin="round"/><path d="M22.8 5.6 L21.1 9.2 L17.2 9.6 L20.1 12.3 L19.3 16.2 L22.8 14.2 Z" fill="#fff"/><path d="M22.4 10 L23.4 9.6 L23.4 13.6 L22.4 13.6 Z" fill="#212a2b"/></svg>
<svg class="r" style="left:0px;top:580px" width="46" height="40" viewBox="0 0 46 40"><defs><clipPath id="av"><path d="M17 9.7 L34.4 9.7 L34.4 28.9 Q34.4 32.9 30.4 32.9 L11 32.9 L11 15.7 Q11 9.7 17 9.7 Z"/></clipPath></defs><g clip-path="url(#av)"><rect x="10" y="9" width="26" height="25" fill="#0dc4b1"/><path d="M13.8 33.5 Q14.6 25.2 19.8 24.2 L22.3 23.4 L25.2 24 Q31.6 25.6 34.6 30.5 L34.6 33.5 Z" fill="#5e5a60"/><path d="M20.6 21 L23.8 21 L24 24.2 L22.2 25.4 L20.4 24.2 Z" fill="#b98672"/><ellipse cx="22.2" cy="16.6" rx="3.5" ry="4.9" fill="#dba792"/><path d="M18.6 15.6 Q18.4 11 22.2 11 Q26 11 25.8 15.6 Q25.4 12.8 22.2 12.6 Q19 12.8 18.6 15.6 Z" fill="#6e5040"/><path d="M18.8 18 Q19.3 22.2 22.2 22.5 Q25.1 22.2 25.6 18 Q24.6 20.2 22.2 20.3 Q19.8 20.2 18.8 18 Z" fill="#b0674a"/><path d="M18.9 15.6 L25.5 15.6" stroke="#4a3a34" stroke-width="0.6"/></g></svg>
<div class="r" style="left:984.2px;top:5.8px;width:34px;height:34px;border-radius:50%;background:#2178c4"></div>
<svg class="r" style="left:980px;top:0px" width="44" height="46" viewBox="0 0 44 46"><path d="M21.8 18.3 L17.4 18.3 Q15.8 18.3 15.8 19.9 L15.8 26.3 Q15.8 27.9 17.4 27.9 L23.9 27.9 Q25.5 27.9 25.5 26.3 L25.5 22.3" fill="none" stroke="#fff" stroke-width="1.4"/><path d="M19.6 24.2 L24.5 19.3" stroke="#fff" stroke-width="1.9" stroke-linecap="round"/><circle cx="26.1" cy="17.8" r="1.05" fill="#fff"/></svg>
<svg class="r" style="left:980px;top:50px" width="44" height="22" viewBox="0 0 44 22"><path d="M21.2 6.6 Q18.7 6.8 18.5 10.5 L18.2 13.8 Q18 15.2 16.1 16 L16.1 16.4 L26.3 16.4 L26.3 16 Q24.4 15.2 24.2 13.8 L23.9 10.5 Q23.7 6.8 21.2 6.6 Z" fill="#273333"/><ellipse cx="21.2" cy="17.4" rx="1.3" ry="0.75" fill="#273333"/><circle cx="27.5" cy="5.8" r="3.1" fill="#2a80cc" stroke="#fff" stroke-width="0.9"/></svg>
<svg class="r" style="left:980px;top:84px" width="44" height="22" viewBox="0 0 44 22"><path d="M21.5 6.6 Q27.1 6.6 27.1 11.8 Q27.1 16.6 21.8 16.9 L17.6 17.3 L15.5 18.7 L15.4 12.4 Q15.4 6.6 21.5 6.6 Z" fill="#273333"/><path d="M22.9 9.1 L18.9 13 L21.2 13 L19.7 15.8 L23.8 11.7 L21.4 11.7 Z" fill="#fff"/><circle cx="27.5" cy="6" r="3.1" fill="#2a80cc" stroke="#fff" stroke-width="0.9"/></svg>
<svg class="r" style="left:980px;top:118px" width="44" height="22" viewBox="0 0 44 22"><circle cx="21.3" cy="12.5" r="6" fill="#273333"/><path d="M19.5 11 Q19.5 9.2 21.3 9.2 Q23.1 9.2 23.1 10.8 Q23.1 11.9 21.3 12.6 L21.3 13.6" fill="none" stroke="#fff" stroke-width="1.3" stroke-linecap="round"/><circle cx="21.3" cy="15.5" r="0.8" fill="#fff"/></svg>
<svg class="r" style="left:630px;top:10px" width="20" height="25" viewBox="0 0 20 25"><rect x="5.8" y="9" width="10.1" height="9.4" rx="1.1" fill="#364141"/><rect x="7.9" y="6.9" width="1.3" height="3" rx="0.4" fill="#364141"/><rect x="12.5" y="6.9" width="1.3" height="3" rx="0.4" fill="#364141"/><rect x="6.6" y="10.4" width="8.5" height="1.7" fill="#7d8686"/><rect x="6.8" y="13.6" width="8.2" height="1.6" fill="#c5caca"/><rect x="6.8" y="15.2" width="3" height="1.2" fill="#9aa2a2"/></svg>
<svg class="r" style="left:830px;top:10px" width="25" height="25" viewBox="0 0 25 25"><path d="M9.2 11.4 L8.3 11.4 L8.3 18.6 L18.6 18.6 L18.6 11.4 L17.7 11.4" fill="none" stroke="#364141" stroke-width="1.3" stroke-linejoin="round"/><path d="M13.4 15.5 L13.4 7.8 M10.8 10.2 L13.4 7.6 L16 10.2" fill="none" stroke="#364141" stroke-width="1.3" stroke-linecap="round" stroke-linejoin="round"/></svg>
<svg class="r" style="left:900px;top:10px" width="25" height="25" viewBox="0 0 25 25"><path d="M10.1 9.3 L21.4 9.3 M10.1 15.7 L21.4 15.7" stroke="#fff" stroke-width="1.2"/><circle cx="17" cy="9.3" r="2" fill="#364141" stroke="#fff" stroke-width="1.2"/><circle cx="14.5" cy="15.7" r="2" fill="#364141" stroke="#fff" stroke-width="1.2"/></svg>
<svg class="r" style="left:215px;top:62px" width="100" height="20" viewBox="0 0 100 20"><path d="M228.8 8.1 Q228.2 8.4 227.6 8.5 Q228.3 8 228.5 7.3 Q227.9 7.7 227.2 7.8 Q226.6 7.1 225.6 7.1 Q223.7 7.1 223.6 9.2 Q221.2 9.1 219.8 7.3 Q219.1 8.7 220.4 9.9 Q219.9 9.9 219.6 9.7 Q219.7 11.2 221.1 11.6 Q220.6 11.7 220.3 11.6 Q220.8 12.8 221.9 12.8 Q220.8 13.7 219.3 13.6 Q226.5 17.2 227.8 9.3 Q228.4 8.8 228.8 8.1 Z" fill="#1da1f2" transform="translate(-215 0) translate(1.5 0)"/><circle cx="34.6" cy="10" r="4" fill="#1877f2"/><path d="M35.2 14 L35.2 10.8 L36.3 10.8 L36.5 9.6 L35.2 9.6 L35.2 8.9 Q35.2 8.3 35.9 8.3 L36.5 8.3 L36.5 7.2 Q34 6.8 34 8.7 L34 9.6 L32.9 9.6 L32.9 10.8 L34 10.8 L34 14 Z" fill="#fff"/><rect x="55.5" y="6.6" width="6.8" height="6.8" rx="1.8" fill="none" stroke="#e5607f" stroke-width="1.2"/><circle cx="58.9" cy="10" r="1.6" fill="none" stroke="#e5607f" stroke-width="1.1"/><rect x="79" y="6.2" width="7.9" height="7.6" rx="0.8" fill="#2867b2"/><rect x="80.3" y="9" width="1.1" height="3.6" fill="#fff"/><circle cx="80.85" cy="7.8" r="0.65" fill="#fff"/><path d="M82.3 12.6 L82.3 9 L83.3 9 L83.3 9.6 Q84 8.8 84.8 8.9 Q85.9 9 85.9 10.4 L85.9 12.6 L84.9 12.6 L84.9 10.6 Q84.9 9.8 84.2 9.8 Q83.4 9.8 83.4 10.7 L83.4 12.6 Z" fill="#fff"/></svg>
</body></html>
